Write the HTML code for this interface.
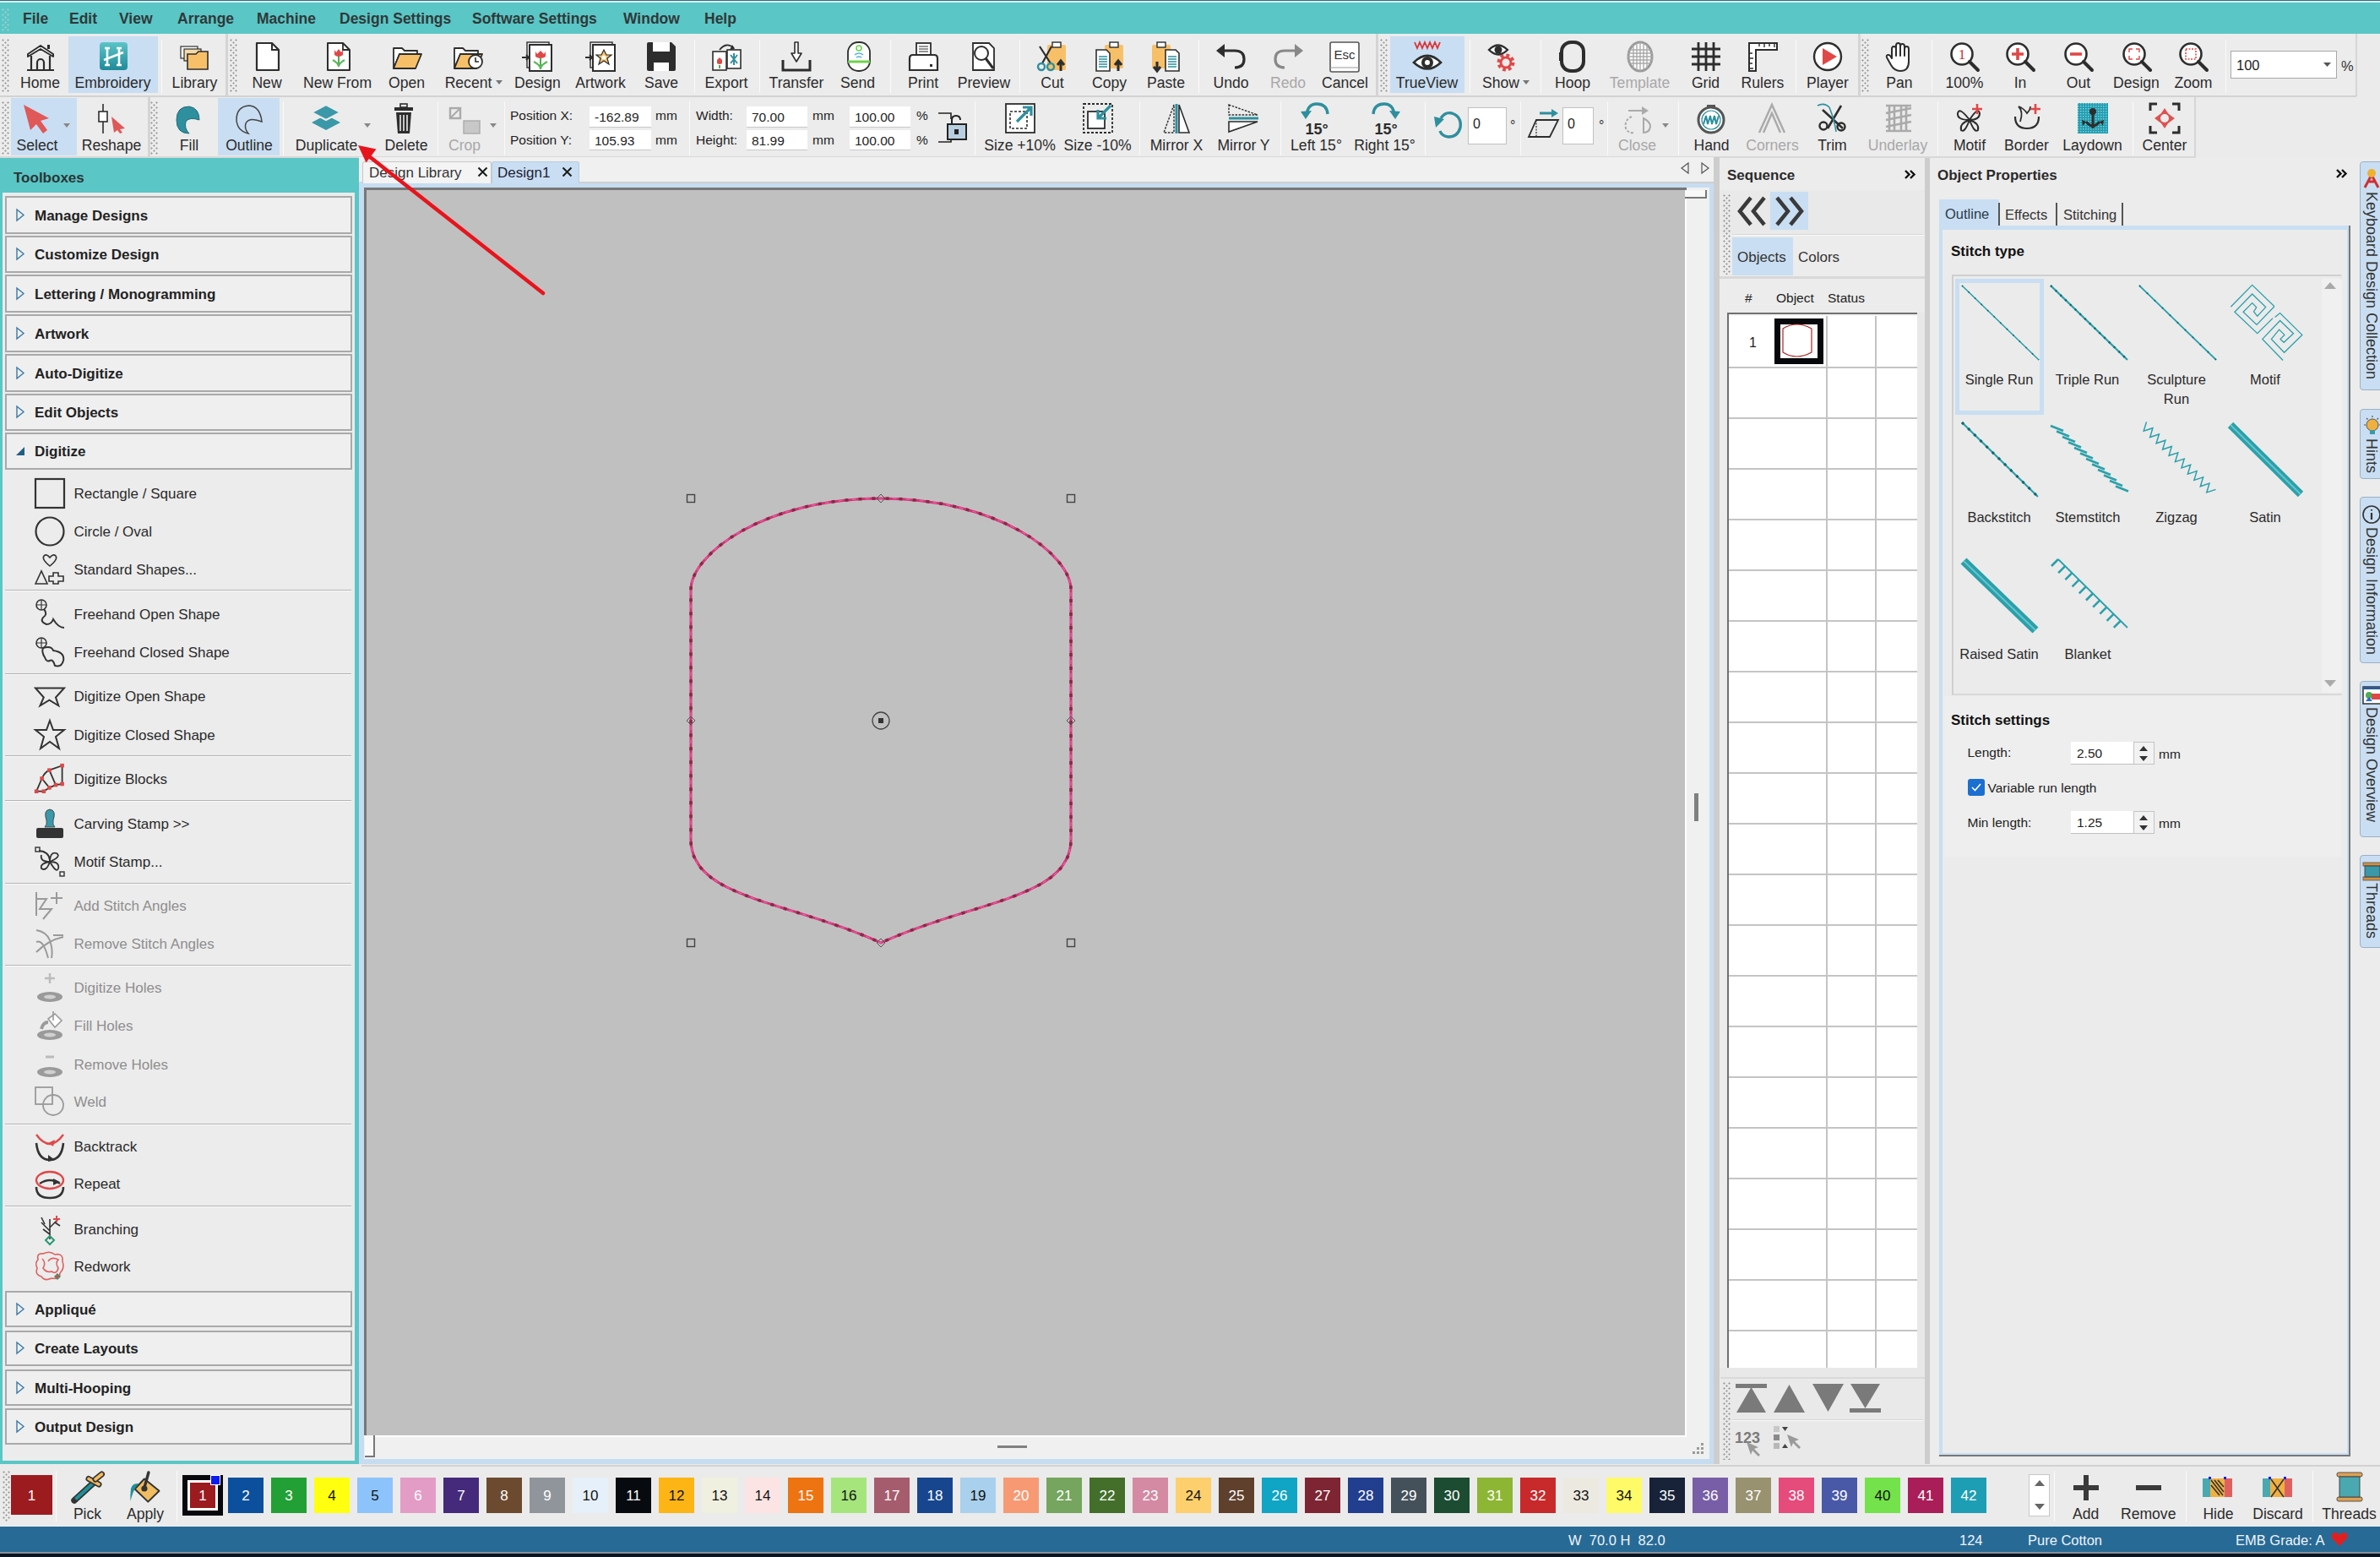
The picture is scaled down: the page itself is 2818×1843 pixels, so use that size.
<!DOCTYPE html><html><head><meta charset="utf-8"><style>
html,body{margin:0;padding:0;}
body{width:2818px;height:1843px;position:relative;overflow:hidden;background:#ebebeb;font-family:"Liberation Sans", sans-serif;}
.t{position:absolute;white-space:nowrap;}
.b{position:absolute;box-sizing:border-box;}
svg.b{overflow:visible;}

</style></head><body>
<div class="b" style="left:0px;top:0px;width:2818px;height:1px;background:#2f6b95"></div>
<div class="b" style="left:0px;top:1px;width:2818px;height:2px;background:#d9f0f0"></div>
<div class="b" style="left:0px;top:3px;width:2818px;height:37px;background:#5ac6c6"></div>
<div class="b" style="left:2px;top:10px;width:9px;height:27px;background-image:radial-gradient(circle at 1.5px 1.5px,#9ccfcf 0.9px,transparent 1.3px),radial-gradient(circle at 1.5px 1.5px,#9ccfcf 0.9px,transparent 1.3px);background-size:6px 6px,6px 6px;background-position:0 0,3px 3px;"></div>
<div class="t" style="left:27.0px;top:14.0px;font-size:17.5px;line-height:17.5px;color:#303838;font-weight:bold;">File</div>
<div class="t" style="left:82.0px;top:14.0px;font-size:17.5px;line-height:17.5px;color:#303838;font-weight:bold;">Edit</div>
<div class="t" style="left:141.0px;top:14.0px;font-size:17.5px;line-height:17.5px;color:#303838;font-weight:bold;">View</div>
<div class="t" style="left:210.0px;top:14.0px;font-size:17.5px;line-height:17.5px;color:#303838;font-weight:bold;">Arrange</div>
<div class="t" style="left:304.0px;top:14.0px;font-size:17.5px;line-height:17.5px;color:#303838;font-weight:bold;">Machine</div>
<div class="t" style="left:402.0px;top:14.0px;font-size:17.5px;line-height:17.5px;color:#303838;font-weight:bold;">Design Settings</div>
<div class="t" style="left:559.0px;top:14.0px;font-size:17.5px;line-height:17.5px;color:#303838;font-weight:bold;">Software Settings</div>
<div class="t" style="left:738.0px;top:14.0px;font-size:17.5px;line-height:17.5px;color:#303838;font-weight:bold;">Window</div>
<div class="t" style="left:834.0px;top:14.0px;font-size:17.5px;line-height:17.5px;color:#303838;font-weight:bold;">Help</div>
<div class="b" style="left:0px;top:40px;width:2818px;height:75px;background:#ebebeb"></div>
<div class="b" style="left:0px;top:40px;width:2790px;height:73px;background:#ececec"></div>
<div class="b" style="left:0px;top:113px;width:2790px;height:2px;background:#d2d2d2"></div>
<div class="b" style="left:2789px;top:40px;width:2px;height:74px;background:#d6d6d6"></div>
<div class="b" style="left:2598px;top:115px;width:2px;height:71px;background:#d6d6d6"></div>
<div class="b" style="left:0px;top:115px;width:2598px;height:70px;background:#ececec"></div>
<div class="b" style="left:0px;top:185px;width:2600px;height:2px;background:#d8d8d8"></div>
<div class="b" style="left:267px;top:40px;width:3px;height:73px;background:#d4d4d4"></div>
<div class="b" style="left:1629px;top:40px;width:3px;height:73px;background:#d4d4d4"></div>
<div class="b" style="left:2200px;top:40px;width:3px;height:73px;background:#d4d4d4"></div>
<div class="b" style="left:175px;top:115px;width:3px;height:70px;background:#d4d4d4"></div>
<div class="b" style="left:2px;top:46px;width:9px;height:63px;background-image:radial-gradient(circle at 1.5px 1.5px,#a0a0a0 0.9px,transparent 1.3px),radial-gradient(circle at 1.5px 1.5px,#a0a0a0 0.9px,transparent 1.3px);background-size:6px 6px,6px 6px;background-position:0 0,3px 3px;"></div>
<div class="b" style="left:272px;top:46px;width:9px;height:63px;background-image:radial-gradient(circle at 1.5px 1.5px,#a0a0a0 0.9px,transparent 1.3px),radial-gradient(circle at 1.5px 1.5px,#a0a0a0 0.9px,transparent 1.3px);background-size:6px 6px,6px 6px;background-position:0 0,3px 3px;"></div>
<div class="b" style="left:1634px;top:46px;width:9px;height:63px;background-image:radial-gradient(circle at 1.5px 1.5px,#a0a0a0 0.9px,transparent 1.3px),radial-gradient(circle at 1.5px 1.5px,#a0a0a0 0.9px,transparent 1.3px);background-size:6px 6px,6px 6px;background-position:0 0,3px 3px;"></div>
<div class="b" style="left:2204px;top:46px;width:9px;height:63px;background-image:radial-gradient(circle at 1.5px 1.5px,#a0a0a0 0.9px,transparent 1.3px),radial-gradient(circle at 1.5px 1.5px,#a0a0a0 0.9px,transparent 1.3px);background-size:6px 6px,6px 6px;background-position:0 0,3px 3px;"></div>
<div class="b" style="left:2px;top:120px;width:9px;height:63px;background-image:radial-gradient(circle at 1.5px 1.5px,#a0a0a0 0.9px,transparent 1.3px),radial-gradient(circle at 1.5px 1.5px,#a0a0a0 0.9px,transparent 1.3px);background-size:6px 6px,6px 6px;background-position:0 0,3px 3px;"></div>
<div class="b" style="left:178px;top:120px;width:9px;height:63px;background-image:radial-gradient(circle at 1.5px 1.5px,#a0a0a0 0.9px,transparent 1.3px),radial-gradient(circle at 1.5px 1.5px,#a0a0a0 0.9px,transparent 1.3px);background-size:6px 6px,6px 6px;background-position:0 0,3px 3px;"></div>
<div class="b" style="left:81px;top:43px;width:106px;height:67px;background:#c9def2"></div>
<div class="b" style="left:1646px;top:43px;width:88px;height:67px;background:#c9def2"></div>
<div class="b" style="left:13px;top:116px;width:78px;height:68px;background:#c9def2"></div>
<div class="b" style="left:258px;top:116px;width:73px;height:68px;background:#c9def2"></div>
<div class="b" style="left:191px;top:47px;width:1px;height:63px;background:#cfcfcf;border-right:1px solid #fafafa"></div>
<div class="b" style="left:822px;top:47px;width:1px;height:63px;background:#cfcfcf;border-right:1px solid #fafafa"></div>
<div class="b" style="left:899px;top:47px;width:1px;height:63px;background:#cfcfcf;border-right:1px solid #fafafa"></div>
<div class="b" style="left:1054px;top:47px;width:1px;height:63px;background:#cfcfcf;border-right:1px solid #fafafa"></div>
<div class="b" style="left:1207px;top:47px;width:1px;height:63px;background:#cfcfcf;border-right:1px solid #fafafa"></div>
<div class="b" style="left:1419px;top:47px;width:1px;height:63px;background:#cfcfcf;border-right:1px solid #fafafa"></div>
<div class="b" style="left:1740px;top:47px;width:1px;height:63px;background:#cfcfcf;border-right:1px solid #fafafa"></div>
<div class="b" style="left:1824px;top:47px;width:1px;height:63px;background:#cfcfcf;border-right:1px solid #fafafa"></div>
<div class="b" style="left:2126px;top:47px;width:1px;height:63px;background:#cfcfcf;border-right:1px solid #fafafa"></div>
<div class="b" style="left:2287px;top:47px;width:1px;height:63px;background:#cfcfcf;border-right:1px solid #fafafa"></div>
<div class="b" style="left:2635px;top:47px;width:1px;height:63px;background:#cfcfcf;border-right:1px solid #fafafa"></div>
<div class="b" style="left:335px;top:120px;width:1px;height:64px;background:#cfcfcf;border-right:1px solid #fafafa"></div>
<div class="b" style="left:518px;top:120px;width:1px;height:64px;background:#cfcfcf;border-right:1px solid #fafafa"></div>
<div class="b" style="left:597px;top:120px;width:1px;height:64px;background:#cfcfcf;border-right:1px solid #fafafa"></div>
<div class="b" style="left:816px;top:120px;width:1px;height:64px;background:#cfcfcf;border-right:1px solid #fafafa"></div>
<div class="b" style="left:1154px;top:120px;width:1px;height:64px;background:#cfcfcf;border-right:1px solid #fafafa"></div>
<div class="b" style="left:1349px;top:120px;width:1px;height:64px;background:#cfcfcf;border-right:1px solid #fafafa"></div>
<div class="b" style="left:1516px;top:120px;width:1px;height:64px;background:#cfcfcf;border-right:1px solid #fafafa"></div>
<div class="b" style="left:1687px;top:120px;width:1px;height:64px;background:#cfcfcf;border-right:1px solid #fafafa"></div>
<div class="b" style="left:1800px;top:120px;width:1px;height:64px;background:#cfcfcf;border-right:1px solid #fafafa"></div>
<div class="b" style="left:1903px;top:120px;width:1px;height:64px;background:#cfcfcf;border-right:1px solid #fafafa"></div>
<div class="b" style="left:1987px;top:120px;width:1px;height:64px;background:#cfcfcf;border-right:1px solid #fafafa"></div>
<div class="b" style="left:2294px;top:120px;width:1px;height:64px;background:#cfcfcf;border-right:1px solid #fafafa"></div>
<div class="b" style="left:2525px;top:120px;width:1px;height:64px;background:#cfcfcf;border-right:1px solid #fafafa"></div>
<svg class="b" style="left:30px;top:49px" width="36" height="36" viewBox="0 0 36 36"><path d="M3 15 L18 5 L33 15 L33 18 L18 9 L3 18 Z" fill="#fff" stroke="#2d2d2d" stroke-width="2" stroke-linejoin="round"/><path d="M7 17 V34 M29 17 V34 M2 34 H34" stroke="#2d2d2d" stroke-width="2.2" fill="none"/><path d="M14 34 V25 A4 4 0 0 1 22 25 V34" stroke="#2d2d2d" stroke-width="2.2" fill="none"/><rect x="26" y="4" width="3" height="5" fill="#2d2d2d"/></svg>
<div class="t" style="left:-102.5px;width:300px;text-align:center;top:90.1px;font-size:17.6px;line-height:17.6px;color:#2b2b2b;font-weight:normal;">Home</div>
<svg class="b" style="left:116px;top:49px" width="36" height="36" viewBox="0 0 36 36"><defs><linearGradient id="gE" x1="0" y1="0" x2="0" y2="1"><stop offset="0" stop-color="#5cc4c8"/><stop offset="1" stop-color="#1f8a98"/></linearGradient></defs><rect x="2" y="1" width="33" height="33" rx="4" fill="url(#gE)"/><path d="M11 8 V28 M25 8 V28 M8 8 H14 M22 8 H28 M8 28 H14 M22 28 H28 M7 22 L30 13" stroke="#fff" stroke-width="2.6" fill="none"/></svg>
<div class="t" style="left:-16.5px;width:300px;text-align:center;top:90.1px;font-size:17.6px;line-height:17.6px;color:#2b2b2b;font-weight:normal;">Embroidery</div>
<svg class="b" style="left:212px;top:49px" width="36" height="36" viewBox="0 0 36 36"><rect x="2" y="6" width="20" height="14" fill="#fff" stroke="#2d2d2d" stroke-width="1.2"/><rect x="6" y="9" width="20" height="14" fill="#f3d9a8" stroke="#2d2d2d" stroke-width="1.2"/><path d="M10 15 H20 L23 12 H34 V33 H10 Z" fill="#f7c068" stroke="#2d2d2d" stroke-width="1.6"/></svg>
<div class="t" style="left:80.5px;width:300px;text-align:center;top:90.1px;font-size:17.6px;line-height:17.6px;color:#2b2b2b;font-weight:normal;">Library</div>
<svg class="b" style="left:298px;top:49px" width="36" height="36" viewBox="0 0 36 36"><path d="M6 2 H24 L32 10 V34 H6 Z" fill="#fff" stroke="#2d2d2d" stroke-width="2.2" stroke-linejoin="round"/><path d="M24 2 V10 H32" fill="none" stroke="#2d2d2d" stroke-width="2"/></svg>
<div class="t" style="left:166.0px;width:300px;text-align:center;top:90.1px;font-size:17.6px;line-height:17.6px;color:#2b2b2b;font-weight:normal;">New</div>
<svg class="b" style="left:382px;top:49px" width="36" height="36" viewBox="0 0 36 36"><path d="M6 2 H24 L32 10 V34 H6 Z" fill="#fff" stroke="#2d2d2d" stroke-width="2" stroke-linejoin="round"/><path d="M24 2 V10 H32" fill="none" stroke="#2d2d2d" stroke-width="1.8"/><path d="M19 28 V17" stroke="#4caf50" stroke-width="2"/><path d="M12 22 Q19 26 19 30 Q19 26 26 22" stroke="#5cb85c" stroke-width="2.2" fill="none"/><path d="M14 10 L16 13 L19 9 L22 13 L24 10 V16 Q19 20 14 16 Z" fill="#e04848"/></svg>
<div class="t" style="left:249.5px;width:300px;text-align:center;top:90.1px;font-size:17.6px;line-height:17.6px;color:#2b2b2b;font-weight:normal;">New From</div>
<svg class="b" style="left:464px;top:49px" width="36" height="36" viewBox="0 0 36 36"><path d="M2 8 H12 L15 11 H30 V15 H9 L2 32 Z" fill="#fff" stroke="#2d2d2d" stroke-width="1.8" stroke-linejoin="round"/><path d="M9 15 H35 L28 32 H2 Z" fill="#f7c068" stroke="#2d2d2d" stroke-width="1.8" stroke-linejoin="round"/></svg>
<div class="t" style="left:331.5px;width:300px;text-align:center;top:90.1px;font-size:17.6px;line-height:17.6px;color:#2b2b2b;font-weight:normal;">Open</div>
<svg class="b" style="left:536px;top:49px" width="36" height="36" viewBox="0 0 36 36"><path d="M2 8 H12 L15 11 H30 V15 H9 L2 32 Z" fill="#fff" stroke="#2d2d2d" stroke-width="1.8" stroke-linejoin="round"/><path d="M9 15 H35 L28 32 H2 Z" fill="#f7c068" stroke="#2d2d2d" stroke-width="1.8" stroke-linejoin="round"/><circle cx="27" cy="24" r="8" fill="#fff" stroke="#2d2d2d" stroke-width="1.8"/><path d="M27 19 V24 H31" stroke="#2d2d2d" stroke-width="1.6" fill="none"/></svg>
<div class="t" style="left:404.5px;width:300px;text-align:center;top:90.1px;font-size:17.6px;line-height:17.6px;color:#2b2b2b;font-weight:normal;">Recent</div>
<svg class="b" style="left:618px;top:49px" width="36" height="36" viewBox="0 0 36 36"><rect x="6" y="1" width="26" height="30" fill="#f4f4f4" stroke="#2d2d2d" stroke-width="1.4"/><rect x="9" y="4" width="26" height="31" fill="#fff" stroke="#2d2d2d" stroke-width="2"/><path d="M22 30 V20" stroke="#4caf50" stroke-width="2"/><path d="M14 24 Q22 28 22 33 Q22 28 30 24" stroke="#5cb85c" stroke-width="2.2" fill="none"/><path d="M16 12 L18 15 L22 11 L26 15 L28 12 V18 Q22 22 16 18 Z" fill="#e04848"/><path d="M0 19 H8 M5 16 L8 19 L5 22" stroke="#2d2d2d" stroke-width="2" fill="none"/></svg>
<div class="t" style="left:486.5px;width:300px;text-align:center;top:90.1px;font-size:17.6px;line-height:17.6px;color:#2b2b2b;font-weight:normal;">Design</div>
<svg class="b" style="left:693px;top:49px" width="36" height="36" viewBox="0 0 36 36"><rect x="6" y="1" width="26" height="30" fill="#f4f4f4" stroke="#2d2d2d" stroke-width="1.4"/><rect x="9" y="4" width="26" height="31" fill="#fff" stroke="#2d2d2d" stroke-width="2"/><path d="M22 10 L25 16 L31 16 L26 20 L28 27 L22 23 L16 27 L18 20 L13 16 L19 16 Z" fill="#f7c068" stroke="#2d2d2d" stroke-width="1.2"/><circle cx="22" cy="19" r="2.5" fill="#fff"/><path d="M0 19 H8 M5 16 L8 19 L5 22" stroke="#2d2d2d" stroke-width="2" fill="none"/></svg>
<div class="t" style="left:561.0px;width:300px;text-align:center;top:90.1px;font-size:17.6px;line-height:17.6px;color:#2b2b2b;font-weight:normal;">Artwork</div>
<svg class="b" style="left:765px;top:49px" width="36" height="36" viewBox="0 0 36 36"><path d="M1 3 Q1 1 3 1 H30 L35 6 V33 Q35 35 33 35 H3 Q1 35 1 33 Z" fill="#2d2d2d"/><rect x="8" y="1" width="20" height="11" fill="#fff"/><rect x="9" y="25" width="18" height="10" fill="#fff"/></svg>
<div class="t" style="left:633.0px;width:300px;text-align:center;top:90.1px;font-size:17.6px;line-height:17.6px;color:#2b2b2b;font-weight:normal;">Save</div>
<svg class="b" style="left:842px;top:49px" width="36" height="36" viewBox="0 0 36 36"><rect x="2" y="12" width="16" height="22" fill="#fff" stroke="#2d2d2d" stroke-width="1.6"/><rect x="19" y="10" width="16" height="22" fill="#fff" stroke="#2d2d2d" stroke-width="1.6"/><path d="M7 22 L10 19 L13 22 V26 Q10 28 7 26 Z" fill="#e04848"/><path d="M10 28 V32" stroke="#4caf50" stroke-width="2"/><path d="M23 16 L31 26 M31 16 L23 26 M27 14 V28" stroke="#2e8f9e" stroke-width="2"/><path d="M10 10 Q18 0 27 8" stroke="#2d2d2d" stroke-width="1.8" fill="none"/><path d="M25 4 L28 9 L22 10" fill="#2d2d2d"/></svg>
<div class="t" style="left:710.0px;width:300px;text-align:center;top:90.1px;font-size:17.6px;line-height:17.6px;color:#2b2b2b;font-weight:normal;">Export</div>
<svg class="b" style="left:925px;top:49px" width="36" height="36" viewBox="0 0 36 36"><path d="M16 1 H20 V14 H24 L18 24 L12 14 H16 Z" fill="#fff" stroke="#2d2d2d" stroke-width="1.6" stroke-linejoin="round"/><path d="M2 22 V34 H34 V22" stroke="#2d2d2d" stroke-width="3" fill="none"/></svg>
<div class="t" style="left:793.0px;width:300px;text-align:center;top:90.1px;font-size:17.6px;line-height:17.6px;color:#2b2b2b;font-weight:normal;">Transfer</div>
<svg class="b" style="left:998px;top:49px" width="36" height="36" viewBox="0 0 36 36"><rect x="6" y="1" width="26" height="34" rx="12" fill="#fff" stroke="#2d2d2d" stroke-width="1.8"/><path d="M6 24 H32" stroke="#6cd24c" stroke-width="3"/><circle cx="19" cy="8" r="3" fill="none" stroke="#6cd24c" stroke-width="1.6"/><path d="M14 16 Q19 12 24 16 M16 19 Q19 17 22 19" stroke="#55b4e0" stroke-width="1.6" fill="none"/></svg>
<div class="t" style="left:865.5px;width:300px;text-align:center;top:90.1px;font-size:17.6px;line-height:17.6px;color:#2b2b2b;font-weight:normal;">Send</div>
<svg class="b" style="left:1075px;top:49px" width="36" height="36" viewBox="0 0 36 36"><rect x="10" y="2" width="17" height="14" fill="#fff" stroke="#2d2d2d" stroke-width="1.8"/><path d="M13 6 H24 M13 9 H24 M13 12 H24" stroke="#2d2d2d" stroke-width="1.2"/><path d="M2 20 Q2 16 6 16 H31 Q35 16 35 20 V34 H2 Z" fill="#fff" stroke="#2d2d2d" stroke-width="2.2"/><rect x="26" y="27" width="3" height="3" fill="#2d2d2d"/></svg>
<div class="t" style="left:943.0px;width:300px;text-align:center;top:90.1px;font-size:17.6px;line-height:17.6px;color:#2b2b2b;font-weight:normal;">Print</div>
<svg class="b" style="left:1147px;top:49px" width="36" height="36" viewBox="0 0 36 36"><path d="M5 2 H24 L30 8 V34 H5 Z" fill="#fff" stroke="#2d2d2d" stroke-width="1.8"/><circle cx="15" cy="14" r="8" fill="#fff" stroke="#2d2d2d" stroke-width="2"/><path d="M20 20 L29 32" stroke="#2d2d2d" stroke-width="3"/></svg>
<div class="t" style="left:1015.0px;width:300px;text-align:center;top:90.1px;font-size:17.6px;line-height:17.6px;color:#2b2b2b;font-weight:normal;">Preview</div>
<svg class="b" style="left:1228px;top:49px" width="36" height="36" viewBox="0 0 36 36"><rect x="12" y="4" width="22" height="30" rx="2" fill="#f7c068"/><rect x="18" y="1" width="10" height="6" fill="#fff" stroke="#2d2d2d" stroke-width="1.4"/><path d="M3 6 L16 26 M17 6 L6 26" stroke="#2d2d2d" stroke-width="2.2"/><circle cx="5" cy="30" r="4" fill="none" stroke="#2e8f9e" stroke-width="2.4"/><circle cx="16" cy="30" r="4" fill="none" stroke="#2e8f9e" stroke-width="2.4"/><path d="M28 35 V25 M24 28 L28 23 L32 28" stroke="#2d2d2d" stroke-width="3" fill="none"/></svg>
<div class="t" style="left:1096.0px;width:300px;text-align:center;top:90.1px;font-size:17.6px;line-height:17.6px;color:#2b2b2b;font-weight:normal;">Cut</div>
<svg class="b" style="left:1296px;top:49px" width="36" height="36" viewBox="0 0 36 36"><rect x="12" y="4" width="22" height="28" rx="2" fill="#f7c068"/><rect x="18" y="1" width="10" height="6" fill="#fff" stroke="#2d2d2d" stroke-width="1.4"/><path d="M2 10 H14 L18 14 V35 H2 Z" fill="#fff" stroke="#2d2d2d" stroke-width="1.6"/><path d="M5 18 H15 M5 21 H15 M5 24 H15 M5 27 H15 M5 30 H15" stroke="#2e8f9e" stroke-width="1.6"/><path d="M28 35 V25 M24 28 L28 23 L32 28" stroke="#2d2d2d" stroke-width="3" fill="none"/></svg>
<div class="t" style="left:1163.5px;width:300px;text-align:center;top:90.1px;font-size:17.6px;line-height:17.6px;color:#2b2b2b;font-weight:normal;">Copy</div>
<svg class="b" style="left:1362px;top:49px" width="36" height="36" viewBox="0 0 36 36"><rect x="2" y="4" width="22" height="28" rx="2" fill="#f7c068"/><rect x="8" y="1" width="10" height="6" fill="#fff" stroke="#2d2d2d" stroke-width="1.4"/><path d="M18 10 H30 L34 14 V35 H18 Z" fill="#fff" stroke="#2d2d2d" stroke-width="1.6"/><path d="M21 18 H31 M21 21 H31 M21 24 H31 M21 27 H31 M21 30 H31" stroke="#2e8f9e" stroke-width="1.6"/><path d="M8 24 V34 M4 30 L8 35 L12 30" stroke="#2d2d2d" stroke-width="3" fill="none"/></svg>
<div class="t" style="left:1230.5px;width:300px;text-align:center;top:90.1px;font-size:17.6px;line-height:17.6px;color:#2b2b2b;font-weight:normal;">Paste</div>
<svg class="b" style="left:1440px;top:49px" width="36" height="36" viewBox="0 0 36 36"><path d="M8 11 H22 Q33 11 33 21 Q33 31 22 31" stroke="#2d2d2d" stroke-width="3.2" fill="none"/><path d="M0 11 L10 3 V19 Z" fill="#2d2d2d"/></svg>
<div class="t" style="left:1307.5px;width:300px;text-align:center;top:90.1px;font-size:17.6px;line-height:17.6px;color:#2b2b2b;font-weight:normal;">Undo</div>
<svg class="b" style="left:1507px;top:49px" width="36" height="36" viewBox="0 0 36 36"><path d="M28 11 H14 Q3 11 3 21 Q3 31 14 31" stroke="#888" stroke-width="3.2" fill="none"/><path d="M36 11 L26 3 V19 Z" fill="#888"/></svg>
<div class="t" style="left:1375.0px;width:300px;text-align:center;top:90.1px;font-size:17.6px;line-height:17.6px;color:#a8a8a8;font-weight:normal;">Redo</div>
<svg class="b" style="left:1574px;top:49px" width="36" height="36" viewBox="0 0 36 36"><rect x="1" y="1" width="34" height="35" rx="2" fill="#fff" stroke="#555" stroke-width="1.6"/><path d="M1 31 H35" stroke="#999" stroke-width="1"/><text x="18" y="21" font-family="Liberation Sans" font-size="15" text-anchor="middle" fill="#333">Esc</text></svg>
<div class="t" style="left:1442.5px;width:300px;text-align:center;top:90.1px;font-size:17.6px;line-height:17.6px;color:#2b2b2b;font-weight:normal;">Cancel</div>
<svg class="b" style="left:1672px;top:49px" width="36" height="36" viewBox="0 0 36 36"><path d="M3 1 L6 8 L9 1 L12 8 L15 1 L18 8 L21 1 L24 8 L27 1 L30 8 L33 1" stroke="#e03030" stroke-width="1.8" fill="none"/><path d="M2 25 Q18 9 34 25 Q18 40 2 25 Z" fill="#fff" stroke="#2d2d2d" stroke-width="2.6"/><circle cx="18" cy="25" r="7" fill="#2d2d2d"/><circle cx="18" cy="25" r="3" fill="#fff"/></svg>
<div class="t" style="left:1539.5px;width:300px;text-align:center;top:90.1px;font-size:17.6px;line-height:17.6px;color:#2b2b2b;font-weight:normal;">TrueView</div>
<svg class="b" style="left:1759px;top:49px" width="36" height="36" viewBox="0 0 36 36"><path d="M4 10 Q15 -1 26 10 Q15 21 4 10 Z" fill="#fff" stroke="#2d2d2d" stroke-width="2.4"/><circle cx="15" cy="10" r="4.5" fill="#2d2d2d"/><circle cx="24" cy="25" r="8" fill="none" stroke="#e04848" stroke-width="5" stroke-dasharray="3.5 2.8"/><circle cx="24" cy="25" r="6" fill="none" stroke="#e04848" stroke-width="3"/></svg>
<div class="t" style="left:1627.0px;width:300px;text-align:center;top:90.1px;font-size:17.6px;line-height:17.6px;color:#2b2b2b;font-weight:normal;">Show</div>
<svg class="b" style="left:1844px;top:49px" width="36" height="36" viewBox="0 0 36 36"><rect x="5" y="1" width="26" height="34" rx="11" fill="none" stroke="#2d2d2d" stroke-width="4"/><rect x="2" y="13" width="4" height="10" fill="#2d2d2d"/></svg>
<div class="t" style="left:1712.0px;width:300px;text-align:center;top:90.1px;font-size:17.6px;line-height:17.6px;color:#2b2b2b;font-weight:normal;">Hoop</div>
<svg class="b" style="left:1924px;top:49px" width="36" height="36" viewBox="0 0 36 36"><ellipse cx="18" cy="18" rx="14" ry="17" fill="#fff" stroke="#999" stroke-width="3"/><path d="M10 4 V32 M14 2 V34 M18 1 V35 M22 2 V34 M26 4 V32 M4 10 H32 M3 14 H33 M3 18 H33 M3 22 H33 M4 26 H32" stroke="#aaa" stroke-width="1.4"/></svg>
<div class="t" style="left:1791.5px;width:300px;text-align:center;top:90.1px;font-size:17.6px;line-height:17.6px;color:#a8a8a8;font-weight:normal;">Template</div>
<svg class="b" style="left:2002px;top:49px" width="36" height="36" viewBox="0 0 36 36"><path d="M9 1 V35 M18 1 V35 M27 1 V35 M1 9 H35 M1 18 H35 M1 27 H35" stroke="#2d2d2d" stroke-width="2.8"/></svg>
<div class="t" style="left:1869.5px;width:300px;text-align:center;top:90.1px;font-size:17.6px;line-height:17.6px;color:#2b2b2b;font-weight:normal;">Grid</div>
<svg class="b" style="left:2069px;top:49px" width="36" height="36" viewBox="0 0 36 36"><path d="M2 2 H35 V10 H10 V35 H2 Z" fill="#fff" stroke="#2d2d2d" stroke-width="2"/><path d="M14 2 V6 M20 2 V7 M26 2 V6 M32 2 V7 M2 14 H6 M2 20 H7 M2 26 H6 M2 32 H7" stroke="#2d2d2d" stroke-width="1.4"/></svg>
<div class="t" style="left:1937.0px;width:300px;text-align:center;top:90.1px;font-size:17.6px;line-height:17.6px;color:#2b2b2b;font-weight:normal;">Rulers</div>
<svg class="b" style="left:2146px;top:49px" width="36" height="36" viewBox="0 0 36 36"><circle cx="18" cy="18" r="16" fill="#fff" stroke="#2d2d2d" stroke-width="2.4"/><path d="M12 8 L29 18 L12 28 Z" fill="#e04848"/></svg>
<div class="t" style="left:2014.0px;width:300px;text-align:center;top:90.1px;font-size:17.6px;line-height:17.6px;color:#2b2b2b;font-weight:normal;">Player</div>
<svg class="b" style="left:2231px;top:49px" width="36" height="36" viewBox="0 0 36 36"><path d="M9 20 V9 Q9 6 11.5 6 Q14 6 14 9 V17 V5 Q14 2 16.5 2 Q19 2 19 5 V17 V6 Q19 3 21.5 3 Q24 3 24 6 V17 V9 Q24 6 26.5 6 Q29 6 29 9 V24 Q29 35 19 35 Q12 35 8 28 L3 19 Q2 16 5 16 Q7 16 9 20 Z" fill="#fff" stroke="#2d2d2d" stroke-width="2" stroke-linejoin="round"/></svg>
<div class="t" style="left:2099.0px;width:300px;text-align:center;top:90.1px;font-size:17.6px;line-height:17.6px;color:#2b2b2b;font-weight:normal;">Pan</div>
<svg class="b" style="left:2308px;top:49px" width="36" height="36" viewBox="0 0 36 36"><circle cx="15" cy="15" r="12.5" fill="#fff" stroke="#2d2d2d" stroke-width="2.6"/><path d="M24 24 L34 34" stroke="#2d2d2d" stroke-width="4" stroke-linecap="round"/><text x="15" y="21" font-family="Liberation Serif" font-size="17" text-anchor="middle" fill="#d03030">1</text></svg>
<div class="t" style="left:2176.0px;width:300px;text-align:center;top:90.1px;font-size:17.6px;line-height:17.6px;color:#2b2b2b;font-weight:normal;">100%</div>
<svg class="b" style="left:2374px;top:49px" width="36" height="36" viewBox="0 0 36 36"><circle cx="15" cy="15" r="12.5" fill="#fff" stroke="#2d2d2d" stroke-width="2.6"/><path d="M24 24 L34 34" stroke="#2d2d2d" stroke-width="4" stroke-linecap="round"/><path d="M15 8 V22 M8 15 H22" stroke="#e04848" stroke-width="3.6"/></svg>
<div class="t" style="left:2242.0px;width:300px;text-align:center;top:90.1px;font-size:17.6px;line-height:17.6px;color:#2b2b2b;font-weight:normal;">In</div>
<svg class="b" style="left:2443px;top:49px" width="36" height="36" viewBox="0 0 36 36"><circle cx="15" cy="15" r="12.5" fill="#fff" stroke="#2d2d2d" stroke-width="2.6"/><path d="M24 24 L34 34" stroke="#2d2d2d" stroke-width="4" stroke-linecap="round"/><path d="M8 15 H22" stroke="#e04848" stroke-width="3.6"/></svg>
<div class="t" style="left:2311.0px;width:300px;text-align:center;top:90.1px;font-size:17.6px;line-height:17.6px;color:#2b2b2b;font-weight:normal;">Out</div>
<svg class="b" style="left:2512px;top:49px" width="36" height="36" viewBox="0 0 36 36"><circle cx="15" cy="15" r="12.5" fill="#fff" stroke="#2d2d2d" stroke-width="2.6"/><path d="M24 24 L34 34" stroke="#2d2d2d" stroke-width="4" stroke-linecap="round"/><path d="M9 13 V9 H13 M17 9 H21 V13 M21 17 V21 H17 M13 21 H9 V17" stroke="#e04848" stroke-width="1.4" fill="none"/></svg>
<div class="t" style="left:2379.5px;width:300px;text-align:center;top:90.1px;font-size:17.6px;line-height:17.6px;color:#2b2b2b;font-weight:normal;">Design</div>
<svg class="b" style="left:2579px;top:49px" width="36" height="36" viewBox="0 0 36 36"><circle cx="15" cy="15" r="12.5" fill="#fff" stroke="#2d2d2d" stroke-width="2.6"/><path d="M24 24 L34 34" stroke="#2d2d2d" stroke-width="4" stroke-linecap="round"/><rect x="9" y="9" width="12" height="12" fill="none" stroke="#e04848" stroke-width="1.6" stroke-dasharray="2 1.5"/></svg>
<div class="t" style="left:2447.0px;width:300px;text-align:center;top:90.1px;font-size:17.6px;line-height:17.6px;color:#2b2b2b;font-weight:normal;">Zoom</div>
<svg class="b" style="left:587px;top:95px" width="8" height="5" viewBox="0 0 8 5"><path d="M0 0 H8 L4 5 Z" fill="#777"/></svg>
<svg class="b" style="left:1803px;top:95px" width="8" height="5" viewBox="0 0 8 5"><path d="M0 0 H8 L4 5 Z" fill="#777"/></svg>
<svg class="b" style="left:26px;top:122px" width="36" height="36" viewBox="0 0 36 36"><path d="M2 2 L32 18 L22 21 L30 32 L25 36 L17 25 L10 32 Z" fill="#e05858" /></svg>
<div class="t" style="left:-106.0px;width:300px;text-align:center;top:163.6px;font-size:17.6px;line-height:17.6px;color:#2b2b2b;font-weight:normal;">Select</div>
<svg class="b" style="left:114px;top:122px" width="36" height="36" viewBox="0 0 36 36"><path d="M8 1 V10 M8 22 V36" stroke="#2d2d2d" stroke-width="1.6"/><rect x="3" y="10" width="10" height="12" fill="#fff" stroke="#2d2d2d" stroke-width="1.6"/><path d="M18 16 L34 30 L28 31 L31 35 L28 36 L25 32 L21 35 Z" fill="#e05858"/></svg>
<div class="t" style="left:-18.0px;width:300px;text-align:center;top:163.6px;font-size:17.6px;line-height:17.6px;color:#2b2b2b;font-weight:normal;">Reshape</div>
<svg class="b" style="left:206px;top:122px" width="36" height="36" viewBox="0 0 36 36"><path d="M30 20 Q30 6 18 4 Q3 4 3 20 Q3 36 18 36 Q12 30 14 22 Q18 16 30 20 Z" fill="#2e8f9e" stroke="#256d78" stroke-width="1"/></svg>
<div class="t" style="left:74.0px;width:300px;text-align:center;top:163.6px;font-size:17.6px;line-height:17.6px;color:#2b2b2b;font-weight:normal;">Fill</div>
<svg class="b" style="left:277px;top:122px" width="36" height="36" viewBox="0 0 36 36"><path d="M33 22 Q31 4 18 3 Q3 4 3 20 Q4 33 17 36 Q12 30 14 24 Q18 16 33 22 Z" fill="none" stroke="#444" stroke-width="1.5"/></svg>
<div class="t" style="left:145.0px;width:300px;text-align:center;top:163.6px;font-size:17.6px;line-height:17.6px;color:#2b2b2b;font-weight:normal;">Outline</div>
<svg class="b" style="left:368px;top:122px" width="36" height="36" viewBox="0 0 36 36"><path d="M18 14 L35 23 L18 32 L1 23 Z" fill="#3a98a8"/><path d="M18 2 L35 11 L18 20 L1 11 Z" fill="#3a98a8" stroke="#ececec" stroke-width="2"/></svg>
<div class="t" style="left:236.5px;width:300px;text-align:center;top:163.6px;font-size:17.6px;line-height:17.6px;color:#2b2b2b;font-weight:normal;">Duplicate</div>
<svg class="b" style="left:463px;top:122px" width="36" height="36" viewBox="0 0 36 36"><rect x="4" y="5" width="22" height="4" fill="#2d2d2d"/><rect x="11" y="1" width="8" height="4" fill="none" stroke="#2d2d2d" stroke-width="1.6"/><path d="M6 11 H24 L22 36 H8 Z" fill="#2d2d2d"/><path d="M11 14 V33 M15 14 V33 M19 14 V33" stroke="#ececec" stroke-width="1.6"/></svg>
<div class="t" style="left:331.0px;width:300px;text-align:center;top:163.6px;font-size:17.6px;line-height:17.6px;color:#2b2b2b;font-weight:normal;">Delete</div>
<svg class="b" style="left:532px;top:122px" width="36" height="36" viewBox="0 0 36 36"><rect x="1" y="6" width="12" height="12" fill="none" stroke="#aaa" stroke-width="2.4"/><path d="M1 18 L13 6" stroke="#aaa" stroke-width="2"/><rect x="17" y="21" width="19" height="15" fill="#c8c8c8" stroke="#aaa" stroke-width="1.4"/></svg>
<div class="t" style="left:400.0px;width:300px;text-align:center;top:163.6px;font-size:17.6px;line-height:17.6px;color:#a8a8a8;font-weight:normal;">Crop</div>
<svg class="b" style="left:1190px;top:122px" width="36" height="36" viewBox="0 0 36 36"><rect x="1" y="1" width="34" height="34" fill="#fff" stroke="#2d2d2d" stroke-width="1.8"/><rect x="6" y="10" width="20" height="20" fill="none" stroke="#2d2d2d" stroke-width="1.6" stroke-dasharray="3 2"/><path d="M14 22 L30 6 M21 5 H31 V15" stroke="#2e8f9e" stroke-width="3.2" fill="none"/></svg>
<div class="t" style="left:1057.5px;width:300px;text-align:center;top:163.6px;font-size:17.6px;line-height:17.6px;color:#2b2b2b;font-weight:normal;">Size +10%</div>
<svg class="b" style="left:1282px;top:122px" width="36" height="36" viewBox="0 0 36 36"><rect x="1" y="1" width="34" height="34" fill="none" stroke="#2d2d2d" stroke-width="1.8" stroke-dasharray="3 2"/><rect x="6" y="10" width="20" height="20" fill="#fff" stroke="#2d2d2d" stroke-width="1.8"/><path d="M33 3 L19 17 M18 8 V18 H28" stroke="#2e8f9e" stroke-width="3.2" fill="none"/></svg>
<div class="t" style="left:1149.5px;width:300px;text-align:center;top:163.6px;font-size:17.6px;line-height:17.6px;color:#2b2b2b;font-weight:normal;">Size -10%</div>
<svg class="b" style="left:1375px;top:122px" width="36" height="36" viewBox="0 0 36 36"><path d="M15 2 L3 35 H15 Z" fill="none" stroke="#2d2d2d" stroke-width="1.4" stroke-dasharray="2.5 1.5"/><path d="M21 2 L33 35 H21 Z" fill="#fff" stroke="#2d2d2d" stroke-width="1.6"/><path d="M18 1 V36" stroke="#2e8f9e" stroke-width="3"/></svg>
<div class="t" style="left:1243.0px;width:300px;text-align:center;top:163.6px;font-size:17.6px;line-height:17.6px;color:#2b2b2b;font-weight:normal;">Mirror X</div>
<svg class="b" style="left:1454px;top:122px" width="36" height="36" viewBox="0 0 36 36"><path d="M1 2 L35 14 H1 Z" fill="none" stroke="#2d2d2d" stroke-width="1.4" stroke-dasharray="2.5 1.5"/><path d="M1 22 L35 22 L1 34 Z" fill="#fff" stroke="#2d2d2d" stroke-width="1.6"/><path d="M1 18 H36" stroke="#2e8f9e" stroke-width="3"/></svg>
<div class="t" style="left:1322.5px;width:300px;text-align:center;top:163.6px;font-size:17.6px;line-height:17.6px;color:#2b2b2b;font-weight:normal;">Mirror Y</div>
<svg class="b" style="left:1540px;top:122px" width="36" height="36" viewBox="0 0 36 36"><path d="M7 15 Q8 1 19 1 Q31 1 32 13" stroke="#2e8f9e" stroke-width="3.4" fill="none"/><path d="M0 10 L13 9 L6 19 Z" fill="#2e8f9e"/><text x="19" y="37" font-family="Liberation Sans" font-weight="bold" font-size="18" text-anchor="middle" fill="#2d2d2d">15°</text></svg>
<div class="t" style="left:1408.5px;width:300px;text-align:center;top:163.6px;font-size:17.6px;line-height:17.6px;color:#2b2b2b;font-weight:normal;">Left 15°</div>
<svg class="b" style="left:1622px;top:122px" width="36" height="36" viewBox="0 0 36 36"><path d="M29 15 Q28 1 17 1 Q5 1 4 13" stroke="#2e8f9e" stroke-width="3.4" fill="none"/><path d="M36 10 L23 9 L30 19 Z" fill="#2e8f9e"/><text x="19" y="37" font-family="Liberation Sans" font-weight="bold" font-size="18" text-anchor="middle" fill="#2d2d2d">15°</text></svg>
<div class="t" style="left:1489.5px;width:300px;text-align:center;top:163.6px;font-size:17.6px;line-height:17.6px;color:#2b2b2b;font-weight:normal;">Right 15°</div>
<svg class="b" style="left:1920px;top:122px" width="36" height="36" viewBox="0 0 36 36"><path d="M12 16 Q3 20 5 30 Q8 36 14 35" stroke="#aaa" stroke-width="2" fill="none" stroke-dasharray="3 2"/><path d="M26 18 Q34 22 34 28 Q33 35 26 35 Z" fill="none" stroke="#aaa" stroke-width="2"/><path d="M8 9 H26" stroke="#aaa" stroke-width="2"/><path d="M32 9 L24 4 V14 Z" fill="#aaa"/></svg>
<div class="t" style="left:1788.5px;width:300px;text-align:center;top:163.6px;font-size:17.6px;line-height:17.6px;color:#a8a8a8;font-weight:normal;">Close</div>
<svg class="b" style="left:2008px;top:122px" width="36" height="36" viewBox="0 0 36 36"><circle cx="18" cy="20" r="15" fill="#fff" stroke="#555" stroke-width="3"/><circle cx="18" cy="20" r="11" fill="none" stroke="#2e8f9e" stroke-width="1.2"/><path d="M9 25 L12 15 L14 25 L17 15 L19 25 L22 15 L24 25 L27 15" stroke="#2e8f9e" stroke-width="2" fill="none"/><rect x="13" y="2" width="10" height="4" fill="#555"/></svg>
<div class="t" style="left:1876.5px;width:300px;text-align:center;top:163.6px;font-size:17.6px;line-height:17.6px;color:#2b2b2b;font-weight:normal;">Hand</div>
<svg class="b" style="left:2080px;top:122px" width="36" height="36" viewBox="0 0 36 36"><path d="M3 35 L18 2 L33 35 M8 35 L18 12 L28 35" stroke="#aaa" stroke-width="2.4" fill="none"/></svg>
<div class="t" style="left:1948.5px;width:300px;text-align:center;top:163.6px;font-size:17.6px;line-height:17.6px;color:#a8a8a8;font-weight:normal;">Corners</div>
<svg class="b" style="left:2152px;top:122px" width="36" height="36" viewBox="0 0 36 36"><path d="M6 8 L30 30 M28 3 L12 30" stroke="#2d2d2d" stroke-width="2.6"/><circle cx="7" cy="27" r="4.5" fill="none" stroke="#2d2d2d" stroke-width="2.4"/><circle cx="28" cy="28" r="4.5" fill="none" stroke="#2d2d2d" stroke-width="2.4"/><path d="M0 3 Q8 -1 14 5 Q20 20 22 34" stroke="#2e8f9e" stroke-width="1.6" fill="none"/></svg>
<div class="t" style="left:2019.5px;width:300px;text-align:center;top:163.6px;font-size:17.6px;line-height:17.6px;color:#2b2b2b;font-weight:normal;">Trim</div>
<svg class="b" style="left:2229px;top:122px" width="36" height="36" viewBox="0 0 36 36"><path d="M4 3 H34 M4 33 H34 M8 3 V33 M14 3 V33 M22 3 V33 M28 3 V33 M4 12 L34 6 M4 20 L34 14 M4 28 L34 22" stroke="#aaa" stroke-width="2.6"/></svg>
<div class="t" style="left:2097.0px;width:300px;text-align:center;top:163.6px;font-size:17.6px;line-height:17.6px;color:#a8a8a8;font-weight:normal;">Underlay</div>
<svg class="b" style="left:2314px;top:122px" width="36" height="36" viewBox="0 0 36 36"><path d="M18 20 Q6 4 4 12 Q3 20 18 20 Q6 24 8 32 Q12 36 18 20 Q24 36 28 32 Q30 24 18 20 Q30 20 30 12 Q28 4 18 20" fill="none" stroke="#2d2d2d" stroke-width="2"/><path d="M27 1 V13 M21 7 H33" stroke="#e04848" stroke-width="2.6"/></svg>
<div class="t" style="left:2182.0px;width:300px;text-align:center;top:163.6px;font-size:17.6px;line-height:17.6px;color:#2b2b2b;font-weight:normal;">Motif</div>
<svg class="b" style="left:2382px;top:122px" width="36" height="36" viewBox="0 0 36 36"><path d="M4 16 Q4 30 18 30 Q32 30 32 16" stroke="#2d2d2d" stroke-width="2.2" fill="none"/><path d="M10 22 Q14 10 8 4 Q14 6 18 12 Q22 8 22 4" stroke="#2d2d2d" stroke-width="1.8" fill="none"/><path d="M28 1 V13 M22 7 H34" stroke="#e04848" stroke-width="2.6"/></svg>
<div class="t" style="left:2249.5px;width:300px;text-align:center;top:163.6px;font-size:17.6px;line-height:17.6px;color:#2b2b2b;font-weight:normal;">Border</div>
<svg class="b" style="left:2460px;top:122px" width="36" height="36" viewBox="0 0 36 36"><defs><pattern id="pL" width="3" height="3" patternUnits="userSpaceOnUse"><rect width="3" height="3" fill="#1e9bb0"/><rect width="1.5" height="1.5" fill="#7fd0da"/></pattern></defs><rect x="0" y="0" width="36" height="36" fill="url(#pL)"/><path d="M18 8 V30 M10 22 Q18 32 26 22" stroke="#2d2d2d" stroke-width="3" fill="none"/><circle cx="18" cy="10" r="4" fill="#2d2d2d"/><path d="M5 20 L10 22 L6 27 Z M31 20 L26 22 L30 27 Z" fill="#2d2d2d"/></svg>
<div class="t" style="left:2327.5px;width:300px;text-align:center;top:163.6px;font-size:17.6px;line-height:17.6px;color:#2b2b2b;font-weight:normal;">Laydown</div>
<svg class="b" style="left:2545px;top:122px" width="36" height="36" viewBox="0 0 36 36"><path d="M1 9 V1 H9 M27 1 H35 V9 M35 27 V35 H27 M9 35 H1 V27" stroke="#2d2d2d" stroke-width="3" fill="none"/><path d="M18 6 L22 12 Q24 14 30 18 L22 24 L18 30 L14 24 L6 18 L14 12 Z" fill="#e05050"/><circle cx="18" cy="18" r="5" fill="#ececec"/></svg>
<div class="t" style="left:2413.0px;width:300px;text-align:center;top:163.6px;font-size:17.6px;line-height:17.6px;color:#2b2b2b;font-weight:normal;">Center</div>
<svg class="b" style="left:75px;top:146px" width="8" height="5" viewBox="0 0 8 5"><path d="M0 0 H8 L4 5 Z" fill="#888"/></svg>
<svg class="b" style="left:431px;top:146px" width="8" height="5" viewBox="0 0 8 5"><path d="M0 0 H8 L4 5 Z" fill="#888"/></svg>
<svg class="b" style="left:580px;top:146px" width="8" height="5" viewBox="0 0 8 5"><path d="M0 0 H8 L4 5 Z" fill="#888"/></svg>
<svg class="b" style="left:1968px;top:146px" width="8" height="5" viewBox="0 0 8 5"><path d="M0 0 H8 L4 5 Z" fill="#888"/></svg>
<svg class="b" style="left:1697px;top:128px" width="36" height="36" viewBox="0 0 36 36"><path d="M9 12 Q14 4 22 6 Q34 10 32 23 Q29 34 18 34 Q10 33 8 27" stroke="#2e8f9e" stroke-width="3.4" fill="none"/><path d="M1 10 L13 13 L3 23 Z" fill="#2e8f9e"/></svg>
<svg class="b" style="left:1809px;top:128px" width="36" height="36" viewBox="0 0 36 36"><path d="M10 14 H36 L26 34 H1 Z" fill="none" stroke="#2d2d2d" stroke-width="1.8"/><path d="M10 14 V34" stroke="#2d2d2d" stroke-width="1.2" stroke-dasharray="2 1.5"/><path d="M14 6 H30" stroke="#2e8f9e" stroke-width="3"/><path d="M36 6 L28 1 V11 Z" fill="#2e8f9e"/></svg>
<div class="t" style="left:604.0px;top:128.9px;font-size:15.5px;line-height:15.5px;color:#1e1e1e;font-weight:normal;">Position X:</div>
<div class="t" style="left:604.0px;top:157.9px;font-size:15.5px;line-height:15.5px;color:#1e1e1e;font-weight:normal;">Position Y:</div>
<div class="b" style="left:698px;top:126px;width:73px;height:25px;background:#fff;border-bottom:1px solid #c8c8c8"></div>
<div class="t" style="left:704.0px;top:131.0px;font-size:15.5px;line-height:15.5px;color:#1e1e1e;font-weight:normal;">-162.89</div>
<div class="b" style="left:698px;top:154px;width:73px;height:24px;background:#fff;border-bottom:1px solid #c8c8c8"></div>
<div class="t" style="left:704.0px;top:158.5px;font-size:15.5px;line-height:15.5px;color:#1e1e1e;font-weight:normal;">105.93</div>
<div class="t" style="left:776.0px;top:128.9px;font-size:15.5px;line-height:15.5px;color:#1e1e1e;font-weight:normal;">mm</div>
<div class="t" style="left:776.0px;top:157.9px;font-size:15.5px;line-height:15.5px;color:#1e1e1e;font-weight:normal;">mm</div>
<div class="t" style="left:824.0px;top:128.9px;font-size:15.5px;line-height:15.5px;color:#1e1e1e;font-weight:normal;">Width:</div>
<div class="t" style="left:824.0px;top:157.9px;font-size:15.5px;line-height:15.5px;color:#1e1e1e;font-weight:normal;">Height:</div>
<div class="b" style="left:884px;top:126px;width:72px;height:25px;background:#fff;border-bottom:1px solid #c8c8c8"></div>
<div class="t" style="left:890.0px;top:131.0px;font-size:15.5px;line-height:15.5px;color:#1e1e1e;font-weight:normal;">70.00</div>
<div class="b" style="left:884px;top:154px;width:72px;height:24px;background:#fff;border-bottom:1px solid #c8c8c8"></div>
<div class="t" style="left:890.0px;top:158.5px;font-size:15.5px;line-height:15.5px;color:#1e1e1e;font-weight:normal;">81.99</div>
<div class="t" style="left:962.0px;top:128.9px;font-size:15.5px;line-height:15.5px;color:#1e1e1e;font-weight:normal;">mm</div>
<div class="t" style="left:962.0px;top:157.9px;font-size:15.5px;line-height:15.5px;color:#1e1e1e;font-weight:normal;">mm</div>
<div class="b" style="left:1006px;top:126px;width:72px;height:25px;background:#fff;border-bottom:1px solid #c8c8c8"></div>
<div class="t" style="left:1012.0px;top:131.0px;font-size:15.5px;line-height:15.5px;color:#1e1e1e;font-weight:normal;">100.00</div>
<div class="b" style="left:1006px;top:154px;width:72px;height:24px;background:#fff;border-bottom:1px solid #c8c8c8"></div>
<div class="t" style="left:1012.0px;top:158.5px;font-size:15.5px;line-height:15.5px;color:#1e1e1e;font-weight:normal;">100.00</div>
<div class="t" style="left:1085.0px;top:128.9px;font-size:15.5px;line-height:15.5px;color:#1e1e1e;font-weight:normal;">%</div>
<div class="t" style="left:1085.0px;top:157.9px;font-size:15.5px;line-height:15.5px;color:#1e1e1e;font-weight:normal;">%</div>
<svg class="b" style="left:1110px;top:133px" width="36" height="36" viewBox="0 0 36 36"><path d="M1 1 H16 V8 M1 35 H16 V28" stroke="#222" stroke-width="1.6" fill="none"/><rect x="12" y="14" width="22" height="18" fill="#b8cfe0" stroke="#222" stroke-width="2"/><path d="M17 14 V9 Q17 4 22 4 Q27 4 27 9" stroke="#222" stroke-width="2" fill="none"/><rect x="20" y="20" width="5" height="6" fill="#222"/></svg>
<div class="b" style="left:1738px;top:127px;width:46px;height:44px;background:#fff;border:1px solid #c0c0c0"></div>
<div class="t" style="left:1744.0px;top:138.5px;font-size:16px;line-height:16px;color:#1e1e1e;font-weight:normal;">0</div>
<div class="t" style="left:1788.0px;top:140.5px;font-size:16px;line-height:16px;color:#333;font-weight:normal;">°</div>
<div class="b" style="left:1850px;top:127px;width:37px;height:44px;background:#fff;border:1px solid #c0c0c0"></div>
<div class="t" style="left:1856.0px;top:138.5px;font-size:16px;line-height:16px;color:#1e1e1e;font-weight:normal;">0</div>
<div class="t" style="left:1893.0px;top:140.5px;font-size:16px;line-height:16px;color:#333;font-weight:normal;">°</div>
<div class="b" style="left:2641px;top:60px;width:126px;height:33px;background:#fff;border:1px solid #a8a8a8"></div>
<div class="t" style="left:2648.0px;top:69.0px;font-size:16.5px;line-height:16.5px;color:#1e1e1e;font-weight:normal;">100</div>
<svg class="b" style="left:2751px;top:74px" width="9" height="5" viewBox="0 0 9 5"><path d="M0 0 H9 L4.5 5 Z" fill="#555"/></svg>
<div class="t" style="left:2772.0px;top:70.0px;font-size:16.5px;line-height:16.5px;color:#333;font-weight:normal;">%</div>
<div class="b" style="left:0px;top:187px;width:428px;height:1547px;background:#5ac6c6"></div>
<div class="b" style="left:3px;top:228px;width:417px;height:1501px;background:#ececec"></div>
<div class="t" style="left:16.0px;top:201.6px;font-size:17px;line-height:17px;color:#2a3434;font-weight:bold;">Toolboxes</div>
<div class="b" style="left:6px;top:232px;width:411px;height:45px;background:#efefef;border:2px solid #a9a9a9"></div>
<svg class="b" style="left:19px;top:246.5px" width="10" height="15" viewBox="0 0 10 15"><path d="M1 1 L9 7.5 L1 14 Z" fill="none" stroke="#3a7aa8" stroke-width="1.4"/></svg>
<div class="t" style="left:41.0px;top:246.6px;font-size:17px;line-height:17px;color:#222;font-weight:bold;">Manage Designs</div>
<div class="b" style="left:6px;top:279px;width:411px;height:44px;background:#efefef;border:2px solid #a9a9a9"></div>
<svg class="b" style="left:19px;top:293.0px" width="10" height="15" viewBox="0 0 10 15"><path d="M1 1 L9 7.5 L1 14 Z" fill="none" stroke="#3a7aa8" stroke-width="1.4"/></svg>
<div class="t" style="left:41.0px;top:293.1px;font-size:17px;line-height:17px;color:#222;font-weight:bold;">Customize Design</div>
<div class="b" style="left:6px;top:325px;width:411px;height:45px;background:#efefef;border:2px solid #a9a9a9"></div>
<svg class="b" style="left:19px;top:339.5px" width="10" height="15" viewBox="0 0 10 15"><path d="M1 1 L9 7.5 L1 14 Z" fill="none" stroke="#3a7aa8" stroke-width="1.4"/></svg>
<div class="t" style="left:41.0px;top:339.6px;font-size:17px;line-height:17px;color:#222;font-weight:bold;">Lettering / Monogramming</div>
<div class="b" style="left:6px;top:372px;width:411px;height:45px;background:#efefef;border:2px solid #a9a9a9"></div>
<svg class="b" style="left:19px;top:386.5px" width="10" height="15" viewBox="0 0 10 15"><path d="M1 1 L9 7.5 L1 14 Z" fill="none" stroke="#3a7aa8" stroke-width="1.4"/></svg>
<div class="t" style="left:41.0px;top:386.6px;font-size:17px;line-height:17px;color:#222;font-weight:bold;">Artwork</div>
<div class="b" style="left:6px;top:419px;width:411px;height:45px;background:#efefef;border:2px solid #a9a9a9"></div>
<svg class="b" style="left:19px;top:433.5px" width="10" height="15" viewBox="0 0 10 15"><path d="M1 1 L9 7.5 L1 14 Z" fill="none" stroke="#3a7aa8" stroke-width="1.4"/></svg>
<div class="t" style="left:41.0px;top:433.6px;font-size:17px;line-height:17px;color:#222;font-weight:bold;">Auto-Digitize</div>
<div class="b" style="left:6px;top:466px;width:411px;height:44px;background:#efefef;border:2px solid #a9a9a9"></div>
<svg class="b" style="left:19px;top:480.0px" width="10" height="15" viewBox="0 0 10 15"><path d="M1 1 L9 7.5 L1 14 Z" fill="none" stroke="#3a7aa8" stroke-width="1.4"/></svg>
<div class="t" style="left:41.0px;top:480.1px;font-size:17px;line-height:17px;color:#222;font-weight:bold;">Edit Objects</div>
<div class="b" style="left:6px;top:512px;width:411px;height:44px;background:#efefef;border:2px solid #a9a9a9"></div>
<svg class="b" style="left:19px;top:529.0px" width="11" height="10" viewBox="0 0 11 10"><path d="M10 0 V10 H0 Z" fill="#1f5f86"/></svg>
<div class="t" style="left:41.0px;top:526.1px;font-size:17px;line-height:17px;color:#222;font-weight:bold;">Digitize</div>
<div class="b" style="left:6px;top:1528px;width:411px;height:43px;background:#efefef;border:2px solid #a9a9a9"></div>
<svg class="b" style="left:19px;top:1541.5px" width="10" height="15" viewBox="0 0 10 15"><path d="M1 1 L9 7.5 L1 14 Z" fill="none" stroke="#3a7aa8" stroke-width="1.4"/></svg>
<div class="t" style="left:41.0px;top:1541.6px;font-size:17px;line-height:17px;color:#222;font-weight:bold;">Appliqué</div>
<div class="b" style="left:6px;top:1575px;width:411px;height:42px;background:#efefef;border:2px solid #a9a9a9"></div>
<svg class="b" style="left:19px;top:1588.0px" width="10" height="15" viewBox="0 0 10 15"><path d="M1 1 L9 7.5 L1 14 Z" fill="none" stroke="#3a7aa8" stroke-width="1.4"/></svg>
<div class="t" style="left:41.0px;top:1588.1px;font-size:17px;line-height:17px;color:#222;font-weight:bold;">Create Layouts</div>
<div class="b" style="left:6px;top:1621px;width:411px;height:43px;background:#efefef;border:2px solid #a9a9a9"></div>
<svg class="b" style="left:19px;top:1634.5px" width="10" height="15" viewBox="0 0 10 15"><path d="M1 1 L9 7.5 L1 14 Z" fill="none" stroke="#3a7aa8" stroke-width="1.4"/></svg>
<div class="t" style="left:41.0px;top:1634.6px;font-size:17px;line-height:17px;color:#222;font-weight:bold;">Multi-Hooping</div>
<div class="b" style="left:6px;top:1667px;width:411px;height:43px;background:#efefef;border:2px solid #a9a9a9"></div>
<svg class="b" style="left:19px;top:1680.5px" width="10" height="15" viewBox="0 0 10 15"><path d="M1 1 L9 7.5 L1 14 Z" fill="none" stroke="#3a7aa8" stroke-width="1.4"/></svg>
<div class="t" style="left:41.0px;top:1680.6px;font-size:17px;line-height:17px;color:#222;font-weight:bold;">Output Design</div>
<svg class="b" style="left:41px;top:566px" width="36" height="36" viewBox="0 0 36 36"><rect x="1" y="1" width="34" height="34" fill="none" stroke="#333" stroke-width="2.2"/></svg>
<div class="t" style="left:87.5px;top:575.8px;font-size:17px;line-height:17px;color:#2a2a2a;font-weight:normal;">Rectangle / Square</div>
<svg class="b" style="left:41px;top:611px" width="36" height="36" viewBox="0 0 36 36"><circle cx="18" cy="18" r="16.5" fill="none" stroke="#333" stroke-width="2.2"/></svg>
<div class="t" style="left:87.5px;top:620.8px;font-size:17px;line-height:17px;color:#2a2a2a;font-weight:normal;">Circle / Oval</div>
<svg class="b" style="left:41px;top:656px" width="36" height="36" viewBox="0 0 36 36"><path d="M18 14 Q8 6 11 2 Q14 -1 18 4 Q22 -1 25 2 Q28 6 18 14 Z" fill="none" stroke="#333" stroke-width="1.6"/><path d="M1 35 L8 20 L15 35 Z" fill="none" stroke="#333" stroke-width="1.6"/><path d="M22 22 H28 V26 H34 V32 H28 V35 H22 V32 H17 V26 H22 Z" fill="none" stroke="#333" stroke-width="1.6"/></svg>
<div class="t" style="left:87.5px;top:665.8px;font-size:17px;line-height:17px;color:#2a2a2a;font-weight:normal;">Standard Shapes...</div>
<svg class="b" style="left:41px;top:709px" width="36" height="36" viewBox="0 0 36 36"><circle cx="8" cy="7" r="6" fill="none" stroke="#333" stroke-width="1.6"/><path d="M8 1 V13 M2 7 H14" stroke="#333" stroke-width="1.2"/><path d="M11 12 Q16 18 10 22 Q6 27 14 30 Q20 30 22 24 Q28 34 35 34" fill="none" stroke="#333" stroke-width="2"/></svg>
<div class="t" style="left:87.5px;top:718.8px;font-size:17px;line-height:17px;color:#2a2a2a;font-weight:normal;">Freehand Open Shape</div>
<svg class="b" style="left:41px;top:754px" width="36" height="36" viewBox="0 0 36 36"><circle cx="8" cy="7" r="6" fill="none" stroke="#333" stroke-width="1.6"/><path d="M8 1 V13 M2 7 H14" stroke="#333" stroke-width="1.2"/><path d="M10 13 Q20 10 22 16 Q36 18 34 28 Q32 36 24 34 Q22 26 18 28 Q14 30 12 24 Q8 18 10 13" fill="none" stroke="#333" stroke-width="2"/></svg>
<div class="t" style="left:87.5px;top:763.8px;font-size:17px;line-height:17px;color:#2a2a2a;font-weight:normal;">Freehand Closed Shape</div>
<svg class="b" style="left:41px;top:806px" width="36" height="36" viewBox="0 0 36 36"><path d="M1 8.5 H35 L25 19.5 L28.3 29.3 L17.4 22.7 L6.5 29.3 L10.8 19.5 Z" fill="none" stroke="#333" stroke-width="2" stroke-linejoin="miter"/></svg>
<div class="t" style="left:87.5px;top:815.8px;font-size:17px;line-height:17px;color:#2a2a2a;font-weight:normal;">Digitize Open Shape</div>
<svg class="b" style="left:41px;top:852px" width="36" height="36" viewBox="0 0 36 36"><path d="M18 1 L22 12 H35 L25 20 L29 34 L18 26 L7 34 L11 20 L1 12 H14 Z" fill="none" stroke="#333" stroke-width="2"/></svg>
<div class="t" style="left:87.5px;top:861.8px;font-size:17px;line-height:17px;color:#2a2a2a;font-weight:normal;">Digitize Closed Shape</div>
<svg class="b" style="left:41px;top:904px" width="36" height="36" viewBox="0 0 36 36"><path d="M2.1 32.7 L8.6 17.5 Q12 10 17.4 7.7 L32.6 2.2 V24 L25 25.1 L17.4 28.4 L10.8 32.7 Z M8.6 17.5 L17.4 28.4 M17.4 7.7 L25 25.1" fill="none" stroke="#333" stroke-width="1.8"/><g fill="#e04848"><rect x="-0.2" y="30.4" width="4.6" height="4.6"/><rect x="8.5" y="30.4" width="4.6" height="4.6"/><rect x="15.1" y="26.1" width="4.6" height="4.6"/><rect x="22.7" y="22.8" width="4.6" height="4.6"/><rect x="30.3" y="21.7" width="4.6" height="4.6"/><rect x="30.3" y="-0.1" width="4.6" height="4.6"/><rect x="15.1" y="5.4" width="4.6" height="4.6"/><rect x="6.3" y="15.2" width="4.6" height="4.6"/></g></svg>
<div class="t" style="left:87.5px;top:913.8px;font-size:17px;line-height:17px;color:#2a2a2a;font-weight:normal;">Digitize Blocks</div>
<svg class="b" style="left:41px;top:957px" width="36" height="36" viewBox="0 0 36 36"><path d="M14 14 Q10 2 18 1 Q26 2 22 14 Q21 19 24 22 H12 Q15 19 14 14 Z" fill="#3a98a8" stroke="#333" stroke-width="0.8"/><rect x="2" y="23" width="32" height="12" rx="2" fill="#333"/></svg>
<div class="t" style="left:87.5px;top:966.8px;font-size:17px;line-height:17px;color:#2a2a2a;font-weight:normal;">Carving Stamp >></div>
<svg class="b" style="left:41px;top:1002px" width="36" height="36" viewBox="0 0 36 36"><rect x="1" y="1" width="5" height="5" fill="none" stroke="#333" stroke-width="1.4"/><rect x="30" y="30" width="5" height="5" fill="none" stroke="#333" stroke-width="1.4"/><path d="M5 5 Q18 6 18 18 Q6 18 8 10 M18 18 Q30 18 28 26 Q26 32 18 18 Q18 6 26 8 Q32 12 18 18 Q14 30 8 26 Q6 20 18 18" fill="none" stroke="#333" stroke-width="1.8"/></svg>
<div class="t" style="left:87.5px;top:1011.8px;font-size:17px;line-height:17px;color:#2a2a2a;font-weight:normal;">Motif Stamp...</div>
<svg class="b" style="left:41px;top:1054px" width="36" height="36" viewBox="0 0 36 36"><path d="M2 2 V30 M2 10 H14 L6 22 H20 L10 34 M26 2 V16 M19 9 H33" stroke="#9a9a9a" stroke-width="2" fill="none"/></svg>
<div class="t" style="left:87.5px;top:1063.8px;font-size:17px;line-height:17px;color:#8e8e8e;font-weight:normal;">Add Stitch Angles</div>
<svg class="b" style="left:41px;top:1099px" width="36" height="36" viewBox="0 0 36 36"><path d="M2 2 Q14 4 18 14 Q22 26 20 35 M2 16 Q10 12 16 35 M2 28 Q16 14 34 10 M22 8 H34" stroke="#9a9a9a" stroke-width="2" fill="none"/></svg>
<div class="t" style="left:87.5px;top:1108.8px;font-size:17px;line-height:17px;color:#8e8e8e;font-weight:normal;">Remove Stitch Angles</div>
<svg class="b" style="left:41px;top:1151px" width="36" height="36" viewBox="0 0 36 36"><ellipse cx="18" cy="29" rx="15" ry="6" fill="#9a9a9a"/><ellipse cx="18" cy="29" rx="7" ry="2.5" fill="#d0d0d0"/><path d="M18 1 V13 M12 7 H24" stroke="#bbb" stroke-width="2.4"/></svg>
<div class="t" style="left:87.5px;top:1160.8px;font-size:17px;line-height:17px;color:#8e8e8e;font-weight:normal;">Digitize Holes</div>
<svg class="b" style="left:41px;top:1196px" width="36" height="36" viewBox="0 0 36 36"><ellipse cx="18" cy="29" rx="15" ry="6" fill="#9a9a9a"/><ellipse cx="18" cy="29" rx="7" ry="2.5" fill="#d0d0d0"/><path d="M16 10 L24 4 L32 12 L24 20 Z" fill="#fff" stroke="#9a9a9a" stroke-width="1.6"/><path d="M22 1 V12" stroke="#9a9a9a" stroke-width="1.6"/><path d="M8 22 Q10 14 16 14" stroke="#9a9a9a" stroke-width="4" fill="none"/></svg>
<div class="t" style="left:87.5px;top:1205.8px;font-size:17px;line-height:17px;color:#8e8e8e;font-weight:normal;">Fill Holes</div>
<svg class="b" style="left:41px;top:1242px" width="36" height="36" viewBox="0 0 36 36"><ellipse cx="18" cy="27" rx="15" ry="6" fill="#9a9a9a"/><ellipse cx="18" cy="27" rx="7" ry="2.5" fill="#d0d0d0"/><path d="M13 9 H23" stroke="#bbb" stroke-width="3"/></svg>
<div class="t" style="left:87.5px;top:1251.8px;font-size:17px;line-height:17px;color:#8e8e8e;font-weight:normal;">Remove Holes</div>
<svg class="b" style="left:41px;top:1286px" width="36" height="36" viewBox="0 0 36 36"><rect x="1" y="1" width="20" height="20" fill="none" stroke="#9a9a9a" stroke-width="1.8"/><circle cx="22" cy="22" r="12" fill="none" stroke="#9a9a9a" stroke-width="1.8"/><path d="M10 22 V21 M22 10 H21" stroke="#9a9a9a" stroke-dasharray="2 2"/></svg>
<div class="t" style="left:87.5px;top:1295.8px;font-size:17px;line-height:17px;color:#8e8e8e;font-weight:normal;">Weld</div>
<svg class="b" style="left:41px;top:1339px" width="36" height="36" viewBox="0 0 36 36"><path d="M2 4 Q18 26 34 4" stroke="#e04848" stroke-width="2.4" fill="none"/><path d="M16 14 L24 10 L22 18 Z" fill="#e04848"/><path d="M2 14 Q4 34 18 34 Q32 34 34 14" stroke="#333" stroke-width="2.6" fill="none"/><path d="M16 28 L24 34 L16 36 Z" fill="#333"/></svg>
<div class="t" style="left:87.5px;top:1348.8px;font-size:17px;line-height:17px;color:#2a2a2a;font-weight:normal;">Backtrack</div>
<svg class="b" style="left:41px;top:1383px" width="36" height="36" viewBox="0 0 36 36"><ellipse cx="18" cy="14" rx="16" ry="10" stroke="#e04848" stroke-width="2.4" fill="none"/><path d="M2 22 Q2 35 18 35 Q34 35 34 22" stroke="#333" stroke-width="2.6" fill="none"/><path d="M6 18 Q18 10 30 18" stroke="#333" stroke-width="2.4" fill="none"/><path d="M22 12 L30 16 L22 20 Z" fill="#333"/></svg>
<div class="t" style="left:87.5px;top:1392.8px;font-size:17px;line-height:17px;color:#2a2a2a;font-weight:normal;">Repeat</div>
<svg class="b" style="left:41px;top:1437px" width="36" height="36" viewBox="0 0 36 36"><path d="M18 30 V6 M18 20 L8 10 M18 16 L28 6 M18 24 L10 18 M12 12 L8 4 M24 10 L30 14" stroke="#333" stroke-width="1.6" fill="none"/><path d="M26 2 V10 M22 6 H30" stroke="#e04848" stroke-width="2"/><path d="M18 26 L23 31 L18 36 L13 31 Z" fill="none" stroke="#2a9a70" stroke-width="2"/></svg>
<div class="t" style="left:87.5px;top:1446.8px;font-size:17px;line-height:17px;color:#2a2a2a;font-weight:normal;">Branching</div>
<svg class="b" style="left:41px;top:1481px" width="36" height="36" viewBox="0 0 36 36"><path d="M4 10 Q2 2 10 3 Q18 -1 24 4 Q34 2 33 12 Q36 20 30 26 Q30 34 20 32 Q12 36 8 30 Q0 28 3 20 Q0 14 4 10 Z M9 9 Q14 14 10 20 Q14 26 20 24 Q26 28 28 20 Q24 14 28 10 Q20 6 16 12" fill="none" stroke="#e06060" stroke-width="1.6"/><path d="M27 26 L31 30 L27 34 L23 30 Z" fill="#2a9a70"/><circle cx="27" cy="30" r="2" fill="#e04848"/></svg>
<div class="t" style="left:87.5px;top:1490.8px;font-size:17px;line-height:17px;color:#2a2a2a;font-weight:normal;">Redwork</div>
<div class="b" style="left:6px;top:698px;width:410px;height:2px;background:#b4b4b4;border-bottom:1px solid #fafafa"></div>
<div class="b" style="left:6px;top:797px;width:410px;height:2px;background:#b4b4b4;border-bottom:1px solid #fafafa"></div>
<div class="b" style="left:6px;top:894px;width:410px;height:2px;background:#b4b4b4;border-bottom:1px solid #fafafa"></div>
<div class="b" style="left:6px;top:947px;width:410px;height:2px;background:#b4b4b4;border-bottom:1px solid #fafafa"></div>
<div class="b" style="left:6px;top:1045px;width:410px;height:2px;background:#b4b4b4;border-bottom:1px solid #fafafa"></div>
<div class="b" style="left:6px;top:1142px;width:410px;height:2px;background:#b4b4b4;border-bottom:1px solid #fafafa"></div>
<div class="b" style="left:6px;top:1330px;width:410px;height:2px;background:#b4b4b4;border-bottom:1px solid #fafafa"></div>
<div class="b" style="left:6px;top:1427px;width:410px;height:2px;background:#b4b4b4;border-bottom:1px solid #fafafa"></div>
<div class="b" style="left:425px;top:186px;width:1604px;height:1547px;background:#c6dcf1"></div>
<div class="b" style="left:425px;top:186px;width:1604px;height:29px;background:#f0f0f0"></div>
<div class="b" style="left:428px;top:215px;width:1601px;height:2px;background:#d0d0d0"></div>
<div class="b" style="left:429px;top:191px;width:153px;height:26px;background:#f4f4f4;border:1px solid #c8c8c8;border-bottom:none;border-radius:3px 3px 0 0"></div>
<div class="t" style="left:437.0px;top:195.6px;font-size:17px;line-height:17px;color:#333;font-weight:normal;">Design Library</div>
<svg class="b" style="left:565px;top:197px" width="13" height="13" viewBox="0 0 13 13"><path d="M1.5 1.5 L11.5 11.5 M11.5 1.5 L1.5 11.5" stroke="#1a1a1a" stroke-width="2"/></svg>
<div class="b" style="left:582px;top:191px;width:104px;height:26px;background:#c9def2;border:1px solid #b8cce0;border-bottom:none;border-radius:3px 3px 0 0"></div>
<div class="t" style="left:589.0px;top:195.6px;font-size:17px;line-height:17px;color:#223;font-weight:normal;">Design1</div>
<svg class="b" style="left:665px;top:197px" width="13" height="13" viewBox="0 0 13 13"><path d="M1.5 1.5 L11.5 11.5 M11.5 1.5 L1.5 11.5" stroke="#1a1a1a" stroke-width="2"/></svg>
<svg class="b" style="left:1990px;top:192px" width="10" height="14" viewBox="0 0 10 14"><path d="M9 1 L1 7 L9 13 Z" fill="none" stroke="#555" stroke-width="1.2"/></svg>
<svg class="b" style="left:2014px;top:192px" width="10" height="14" viewBox="0 0 10 14"><path d="M1 1 L9 7 L1 13 Z" fill="none" stroke="#555" stroke-width="1.2"/></svg>
<div class="b" style="left:431px;top:222px;width:1593px;height:1505px;background:#f0f0f0"></div>
<div class="b" style="left:431px;top:222px;width:1566px;height:1477px;background:#777"></div>
<div class="b" style="left:434px;top:225px;width:1561px;height:1474px;background:#c0c0c0"></div>
<div class="b" style="left:1995px;top:225px;width:2px;height:1474px;background:#fff"></div>
<div class="b" style="left:1995px;top:225px;width:26px;height:10px;background:#f8f8f8;border:2px solid #777;border-top:none;border-left:none"></div>
<div class="b" style="left:2006px;top:939px;width:5px;height:33px;background:#808080"></div>
<div class="b" style="left:431px;top:1699px;width:1566px;height:2px;background:#fff"></div>
<div class="b" style="left:432px;top:1699px;width:12px;height:26px;background:#f8f8f8;border:2px solid #777;border-top:none;border-left:none"></div>
<div class="b" style="left:1181px;top:1711px;width:35px;height:3px;background:#808080"></div>
<svg class="b" style="left:2004px;top:1708px" width="14" height="14" viewBox="0 0 14 14"><g fill="#9a9a9a"><rect x="10" y="0" width="3" height="3"/><rect x="5" y="5" width="3" height="3"/><rect x="10" y="5" width="3" height="3"/><rect x="0" y="10" width="3" height="3"/><rect x="5" y="10" width="3" height="3"/><rect x="10" y="10" width="3" height="3"/></g></svg>
<div class="b" style="left:2029px;top:186px;width:7px;height:1549px;background:#cdcdcd"></div>
<svg class="b" style="left:0;top:0" width="2818" height="1843"><path d="M818,698 C818,656 905,590 1043,590 C1181,590 1268,656 1268,698 L1268,994 C1268,1063 1155,1065.6 1043,1116 C931,1065.6 818,1063 818,994 Z" fill="none" stroke="#cf3474" stroke-width="3"/><path d="M818,698 C818,656 905,590 1043,590 C1181,590 1268,656 1268,698 L1268,994 C1268,1063 1155,1065.6 1043,1116 C931,1065.6 818,1063 818,994 Z" fill="none" stroke="#8a2848" stroke-width="3.6" stroke-dasharray="4 12"/><path d="M818,698 C818,656 905,590 1043,590 C1181,590 1268,656 1268,698 L1268,994 C1268,1063 1155,1065.6 1043,1116 C931,1065.6 818,1063 818,994 Z" fill="none" stroke="#f060a8" stroke-width="1.2" stroke-dasharray="5 11" stroke-dashoffset="8"/><rect x="813.5" y="585.5" width="9" height="9" fill="none" stroke="#444" stroke-width="1.4"/><rect x="1263.5" y="585.5" width="9" height="9" fill="none" stroke="#444" stroke-width="1.4"/><rect x="813.5" y="1111.5" width="9" height="9" fill="none" stroke="#444" stroke-width="1.4"/><rect x="1263.5" y="1111.5" width="9" height="9" fill="none" stroke="#444" stroke-width="1.4"/><path d="M1038,590 L1043,585 L1048,590 L1043,595 Z" fill="none" stroke="#555" stroke-width="1"/><path d="M813,853 L818,848 L823,853 L818,858 Z" fill="none" stroke="#555" stroke-width="1"/><path d="M1263,853 L1268,848 L1273,853 L1268,858 Z" fill="none" stroke="#555" stroke-width="1"/><path d="M1038,1116 L1043,1111 L1048,1116 L1043,1121 Z" fill="none" stroke="#555" stroke-width="1"/><circle cx="1043" cy="853" r="10" fill="none" stroke="#444" stroke-width="1.3"/><rect x="1040" y="850" width="6" height="6" fill="#333"/><path d="M643,347 L437,185" stroke="#e8141c" stroke-width="4.5" stroke-linecap="round"/><path d="M424,172 L445.5,176.5 L433.5,192.5 Z" fill="#e8141c"/></svg>
<div class="b" style="left:2036px;top:187px;width:243px;height:1548px;background:#ececec"></div>
<div class="t" style="left:2045.0px;top:198.6px;font-size:17px;line-height:17px;color:#2a2a2a;font-weight:bold;">Sequence</div>
<svg class="b" style="left:2255px;top:201px" width="13" height="11" viewBox="0 0 13 11"><path d="M1 1 L5.5 5.5 L1 10 M7 1 L11.5 5.5 L7 10" stroke="#111" stroke-width="2.4" fill="none"/></svg>
<div class="b" style="left:2036px;top:225px;width:243px;height:52px;background:#e9e9e9"></div>
<div class="b" style="left:2040px;top:230px;width:9px;height:95px;background-image:radial-gradient(circle at 1.5px 1.5px,#a0a0a0 0.9px,transparent 1.3px),radial-gradient(circle at 1.5px 1.5px,#a0a0a0 0.9px,transparent 1.3px);background-size:6px 6px,6px 6px;background-position:0 0,3px 3px;"></div>
<svg class="b" style="left:2056px;top:232px" width="36" height="36" viewBox="0 0 36 36"><path d="M17 2 L4 18 L17 34 M33 2 L20 18 L33 34" stroke="#3a3a3a" stroke-width="4.5" fill="none"/></svg>
<div class="b" style="left:2096px;top:227px;width:45px;height:45px;background:#c9def2"></div>
<svg class="b" style="left:2101px;top:232px" width="36" height="36" viewBox="0 0 36 36"><path d="M3 2 L16 18 L3 34 M19 2 L32 18 L19 34" stroke="#3a3a3a" stroke-width="4.5" fill="none"/></svg>
<div class="b" style="left:2051px;top:277px;width:226px;height:2px;background:#d6d6d6;border-bottom:1px solid #fafafa"></div>
<div class="b" style="left:2051px;top:281px;width:72px;height:45px;background:#c9def2"></div>
<div class="t" style="left:2057.0px;top:295.6px;font-size:17px;line-height:17px;color:#333;font-weight:normal;">Objects</div>
<div class="t" style="left:2129.0px;top:295.6px;font-size:17px;line-height:17px;color:#333;font-weight:normal;">Colors</div>
<div class="b" style="left:2036px;top:327px;width:243px;height:3px;background:#d8d8d8"></div>
<div class="t" style="left:2066.0px;top:344.9px;font-size:15.5px;line-height:15.5px;color:#222;font-weight:normal;">#</div>
<div class="t" style="left:2103.0px;top:344.9px;font-size:15.5px;line-height:15.5px;color:#222;font-weight:normal;">Object</div>
<div class="t" style="left:2164.0px;top:344.9px;font-size:15.5px;line-height:15.5px;color:#222;font-weight:normal;">Status</div>
<div class="b" style="left:2045px;top:370px;width:225px;height:1249px;background:#fff;border-left:2px solid #707070;border-top:2px solid #707070"></div>
<div class="b" style="left:2047px;top:434px;width:223px;height:2px;background:#c4c4c4"></div>
<div class="b" style="left:2047px;top:494px;width:223px;height:2px;background:#c4c4c4"></div>
<div class="b" style="left:2047px;top:554px;width:223px;height:2px;background:#c4c4c4"></div>
<div class="b" style="left:2047px;top:614px;width:223px;height:2px;background:#c4c4c4"></div>
<div class="b" style="left:2047px;top:674px;width:223px;height:2px;background:#c4c4c4"></div>
<div class="b" style="left:2047px;top:734px;width:223px;height:2px;background:#c4c4c4"></div>
<div class="b" style="left:2047px;top:794px;width:223px;height:2px;background:#c4c4c4"></div>
<div class="b" style="left:2047px;top:854px;width:223px;height:2px;background:#c4c4c4"></div>
<div class="b" style="left:2047px;top:914px;width:223px;height:2px;background:#c4c4c4"></div>
<div class="b" style="left:2047px;top:974px;width:223px;height:2px;background:#c4c4c4"></div>
<div class="b" style="left:2047px;top:1034px;width:223px;height:2px;background:#c4c4c4"></div>
<div class="b" style="left:2047px;top:1094px;width:223px;height:2px;background:#c4c4c4"></div>
<div class="b" style="left:2047px;top:1154px;width:223px;height:2px;background:#c4c4c4"></div>
<div class="b" style="left:2047px;top:1214px;width:223px;height:2px;background:#c4c4c4"></div>
<div class="b" style="left:2047px;top:1274px;width:223px;height:2px;background:#c4c4c4"></div>
<div class="b" style="left:2047px;top:1334px;width:223px;height:2px;background:#c4c4c4"></div>
<div class="b" style="left:2047px;top:1394px;width:223px;height:2px;background:#c4c4c4"></div>
<div class="b" style="left:2047px;top:1454px;width:223px;height:2px;background:#c4c4c4"></div>
<div class="b" style="left:2047px;top:1514px;width:223px;height:2px;background:#c4c4c4"></div>
<div class="b" style="left:2047px;top:1574px;width:223px;height:2px;background:#c4c4c4"></div>
<div class="b" style="left:2162px;top:372px;width:2px;height:1247px;background:#c4c4c4"></div>
<div class="b" style="left:2220px;top:372px;width:2px;height:1247px;background:#c4c4c4"></div>
<div class="b" style="left:2047px;top:372px;width:223px;height:2px;background:#f4f4f4"></div>
<div class="t" style="left:2071.0px;top:397.5px;font-size:16px;line-height:16px;color:#222;font-weight:normal;">1</div>
<div class="b" style="left:2101px;top:377px;width:58px;height:54px;background:#06080c"></div>
<div class="b" style="left:2108px;top:384px;width:44px;height:40px;background:#fff"></div>
<svg class="b" style="left:2107px;top:381px" width="42" height="46" viewBox="0 0 42 46"><path d="M4 8 Q20 -2 38 8 L38 36 Q20 46 4 36 Z" fill="none" stroke="#b02020" stroke-width="1.2"/></svg>
<div class="b" style="left:2270px;top:370px;width:9px;height:1252px;background:#e8e8e8"></div>
<div class="b" style="left:2036px;top:1619px;width:243px;height:11px;background:#e8e8e8"></div>
<div class="b" style="left:2037px;top:1630px;width:242px;height:103px;background:#e9e9e9;border-top:2px solid #dadada"></div>
<div class="b" style="left:2040px;top:1636px;width:9px;height:92px;background-image:radial-gradient(circle at 1.5px 1.5px,#a0a0a0 0.9px,transparent 1.3px),radial-gradient(circle at 1.5px 1.5px,#a0a0a0 0.9px,transparent 1.3px);background-size:6px 6px,6px 6px;background-position:0 0,3px 3px;"></div>
<svg class="b" style="left:2055px;top:1638px" width="37" height="34" viewBox="0 0 37 34"><rect x="0" y="0" width="37" height="5" fill="#7a7a7a"/><path d="M18.5 4 L36 34 H1 Z" fill="#7a7a7a"/></svg>
<svg class="b" style="left:2100px;top:1638px" width="37" height="34" viewBox="0 0 37 34"><path d="M18.5 1 L37 34 H0 Z" fill="#7a7a7a"/></svg>
<svg class="b" style="left:2146px;top:1638px" width="37" height="34" viewBox="0 0 37 34"><path d="M0 0 H37 L18.5 33 Z" fill="#7a7a7a"/></svg>
<svg class="b" style="left:2190px;top:1638px" width="37" height="34" viewBox="0 0 37 34"><path d="M1 0 H36 L18.5 29 Z" fill="#7a7a7a"/><rect x="0" y="29" width="37" height="5" fill="#7a7a7a"/></svg>
<div class="b" style="left:2051px;top:1680px;width:226px;height:2px;background:#d6d6d6;border-bottom:1px solid #fafafa"></div>
<div class="t" style="left:2054.0px;top:1692.8px;font-size:18px;line-height:18px;color:#7a7a7a;font-weight:bold;">123</div>
<svg class="b" style="left:2068px;top:1707px" width="18" height="18" viewBox="0 0 18 18"><path d="M0 0 L14 6 L9 8 L16 15 L14 17 L7 10 L5 15 Z" fill="#9a9a9a"/></svg>
<svg class="b" style="left:2100px;top:1688px" width="40" height="40" viewBox="0 0 40 40"><rect x="0" y="0" width="7" height="7" fill="#c8c8c8"/><rect x="0" y="10" width="7" height="7" fill="#8a8a8a"/><rect x="0" y="20" width="7" height="7" fill="#b8b8b8"/><path d="M10 1 H17 L13.5 6 Z" fill="#444"/><path d="M10 26 H17 L13.5 21 Z" fill="#444"/><path d="M16 10 L30 16 L25 18 L32 25 L30 27 L23 20 L21 25 Z" fill="#9a9a9a"/></svg>
<div class="b" style="left:2279px;top:187px;width:6px;height:1548px;background:#cdcdcd"></div>
<div class="b" style="left:2285px;top:187px;width:509px;height:1548px;background:#ececec"></div>
<div class="t" style="left:2294.0px;top:198.6px;font-size:17px;line-height:17px;color:#2a2a2a;font-weight:bold;">Object Properties</div>
<svg class="b" style="left:2766px;top:200px" width="13" height="11" viewBox="0 0 13 11"><path d="M1 1 L5.5 5.5 L1 10 M7 1 L11.5 5.5 L7 10" stroke="#111" stroke-width="2.4" fill="none"/></svg>
<div class="b" style="left:2296px;top:236px;width:71px;height:34px;background:#c9def2"></div>
<div class="t" style="left:2303.0px;top:245.0px;font-size:16.5px;line-height:16.5px;color:#2a3a4a;font-weight:normal;">Outline</div>
<div class="b" style="left:2366px;top:240px;width:2px;height:28px;background:#555"></div>
<div class="t" style="left:2374.0px;top:246.0px;font-size:16.5px;line-height:16.5px;color:#333;font-weight:normal;">Effects</div>
<div class="b" style="left:2434px;top:240px;width:2px;height:28px;background:#555"></div>
<div class="t" style="left:2443.0px;top:246.0px;font-size:16.5px;line-height:16.5px;color:#333;font-weight:normal;">Stitching</div>
<div class="b" style="left:2512px;top:240px;width:2px;height:28px;background:#555"></div>
<div class="b" style="left:2296px;top:267px;width:487px;height:1457px;background:#c9def2;border-right:2px solid #777;border-bottom:2px solid #777"></div>
<div class="b" style="left:2300px;top:272px;width:479px;height:1448px;background:#ebebeb"></div>
<div class="t" style="left:2310.0px;top:288.6px;font-size:17px;line-height:17px;color:#111;font-weight:bold;">Stitch type</div>
<div class="b" style="left:2311px;top:325px;width:462px;height:498px;background:#ebebeb;border:2px solid #cfcfcf;border-right-color:#e4e4e4;border-bottom-color:#d8d8d8"></div>
<div class="b" style="left:2749px;top:330px;width:24px;height:490px;background:#f0f0f0"></div>
<svg class="b" style="left:2752px;top:334px" width="14" height="8" viewBox="0 0 14 8"><path d="M0 8 L7 0 L14 8 Z" fill="#aaa"/></svg>
<svg class="b" style="left:2752px;top:805px" width="14" height="8" viewBox="0 0 14 8"><path d="M0 0 H14 L7 8 Z" fill="#aaa"/></svg>
<div class="b" style="left:2315px;top:330px;width:105px;height:161px;background:#c9def2"></div>
<div class="b" style="left:2320px;top:335px;width:95px;height:151px;background:#ebebeb"></div>
<svg class="b" style="left:0;top:0" width="2818" height="1843"><path d="M2323,338 L2414,426" stroke="#2aa0aa" stroke-width="1.6" /><path d="M2323,338 L2414,426" stroke-width="1.6" stroke="#17666e" stroke-dasharray="1.5 9"/><path d="M2428,338 L2519,426" stroke="#2aa0aa" stroke-width="2.4" /><path d="M2428,338 L2519,426" stroke-width="2.4" stroke="#17666e" stroke-dasharray="2 6"/><path d="M2533,338 L2624,426" stroke="#2aa0aa" stroke-width="1.8" /><path d="M2533,338 L2624,426" stroke-width="1.8" stroke="#17666e" stroke-dasharray="1.5 11"/><g fill="none" stroke="#2aa0aa" stroke-width="1.3" stroke-linejoin="miter"><path d="M2641.3,363.2 L2666.7,337.4 L2692.5,362.2 L2692.5,363.2 L2672.0,384.4 L2656.1,369.2 L2666.7,358.6 L2671.7,363.9 L2668.5,368.9 L2672.8,374.2 L2682.7,363.6 L2666.7,348.0 L2645.9,369.2 L2672.8,394.7 L2691.1,376.6"/><path d="M2693.6,375.6 L2699.6,370.6 L2725.8,396.4 L2704.6,417.3 L2689.4,401.4 L2698.6,390.1 L2704.9,396.4 L2700.0,401.4 L2704.2,405.3 L2715.5,394.7 L2699.6,379.5 L2678.8,401.4 L2703.1,426.5"/></g><path d="M2323,500 L2413,588" stroke="#2aa0aa" stroke-width="2.2" /><path d="M2323,500 L2413,588" stroke-width="3" stroke="#17666e" stroke-dasharray="3 7"/><path d="M2428.0,504.0 l15,6" stroke="#2aa0aa" stroke-width="2.6"/><path d="M2435.0,510.5 l15,6" stroke="#2aa0aa" stroke-width="2.6"/><path d="M2442.0,517.0 l15,6" stroke="#2aa0aa" stroke-width="2.6"/><path d="M2449.0,523.5 l15,6" stroke="#2aa0aa" stroke-width="2.6"/><path d="M2456.0,530.0 l15,6" stroke="#2aa0aa" stroke-width="2.6"/><path d="M2463.0,536.5 l15,6" stroke="#2aa0aa" stroke-width="2.6"/><path d="M2470.0,543.0 l15,6" stroke="#2aa0aa" stroke-width="2.6"/><path d="M2477.0,549.5 l15,6" stroke="#2aa0aa" stroke-width="2.6"/><path d="M2484.0,556.0 l15,6" stroke="#2aa0aa" stroke-width="2.6"/><path d="M2491.0,562.5 l15,6" stroke="#2aa0aa" stroke-width="2.6"/><path d="M2498.0,569.0 l15,6" stroke="#2aa0aa" stroke-width="2.6"/><path d="M2505.0,575.5 l15,6" stroke="#2aa0aa" stroke-width="2.6"/><path d="M2541.5,499.4 L2538.2,510.2 L2548.9,506.7 L2545.7,517.5 L2556.4,514.0 L2553.1,524.8 L2563.9,521.2 L2560.6,532.0 L2571.3,528.5 L2568.1,539.3 L2578.8,535.8 L2575.5,546.6 L2586.2,543.1 L2583.0,553.9 L2593.7,550.3 L2590.4,561.1 L2601.1,557.6 L2597.9,568.4 L2608.6,564.9 L2605.3,575.7 L2616.0,572.1 L2612.8,582.9 L2623.5,579.4" fill="none" stroke="#2aa0aa" stroke-width="1.5"/><path d="M2641,503 L2724,585" stroke="#2aa0aa" stroke-width="9" /><path d="M2641,503 L2724,585" stroke-width="2" stroke="#66c4cc"/><path d="M2325,664 L2410,746" stroke="#2aa0aa" stroke-width="10" /><path d="M2325,664 L2410,746" stroke-width="2" stroke="#66c4cc"/><path d="M2437,662 L2519,743" stroke="#2aa0aa" stroke-width="1.8"/><path d="M2437.0,662.0 l-8,8" stroke="#2aa0aa" stroke-width="2.6"/><path d="M2445.2,670.1 l-8,8" stroke="#2aa0aa" stroke-width="2.6"/><path d="M2453.4,678.2 l-8,8" stroke="#2aa0aa" stroke-width="2.6"/><path d="M2461.6,686.3 l-8,8" stroke="#2aa0aa" stroke-width="2.6"/><path d="M2469.8,694.4 l-8,8" stroke="#2aa0aa" stroke-width="2.6"/><path d="M2478.0,702.5 l-8,8" stroke="#2aa0aa" stroke-width="2.6"/><path d="M2486.2,710.6 l-8,8" stroke="#2aa0aa" stroke-width="2.6"/><path d="M2494.4,718.7 l-8,8" stroke="#2aa0aa" stroke-width="2.6"/><path d="M2502.6,726.8 l-8,8" stroke="#2aa0aa" stroke-width="2.6"/><path d="M2510.8,734.9 l-8,8" stroke="#2aa0aa" stroke-width="2.6"/></svg>
<div class="t" style="left:2217.0px;width:300px;text-align:center;top:441.0px;font-size:16.5px;line-height:16.5px;color:#2a2a2a;font-weight:normal;">Single Run</div>
<div class="t" style="left:2321.5px;width:300px;text-align:center;top:441.0px;font-size:16.5px;line-height:16.5px;color:#2a2a2a;font-weight:normal;">Triple Run</div>
<div class="t" style="left:2427.0px;width:300px;text-align:center;top:441.0px;font-size:16.5px;line-height:16.5px;color:#2a2a2a;font-weight:normal;">Sculpture</div>
<div class="t" style="left:2427.0px;width:300px;text-align:center;top:464.0px;font-size:16.5px;line-height:16.5px;color:#2a2a2a;font-weight:normal;">Run</div>
<div class="t" style="left:2532.0px;width:300px;text-align:center;top:441.0px;font-size:16.5px;line-height:16.5px;color:#2a2a2a;font-weight:normal;">Motif</div>
<div class="t" style="left:2217.0px;width:300px;text-align:center;top:604.0px;font-size:16.5px;line-height:16.5px;color:#2a2a2a;font-weight:normal;">Backstitch</div>
<div class="t" style="left:2322.0px;width:300px;text-align:center;top:604.0px;font-size:16.5px;line-height:16.5px;color:#2a2a2a;font-weight:normal;">Stemstitch</div>
<div class="t" style="left:2427.0px;width:300px;text-align:center;top:604.0px;font-size:16.5px;line-height:16.5px;color:#2a2a2a;font-weight:normal;">Zigzag</div>
<div class="t" style="left:2532.0px;width:300px;text-align:center;top:604.0px;font-size:16.5px;line-height:16.5px;color:#2a2a2a;font-weight:normal;">Satin</div>
<div class="t" style="left:2217.0px;width:300px;text-align:center;top:766.0px;font-size:16.5px;line-height:16.5px;color:#2a2a2a;font-weight:normal;">Raised Satin</div>
<div class="t" style="left:2322.0px;width:300px;text-align:center;top:766.0px;font-size:16.5px;line-height:16.5px;color:#2a2a2a;font-weight:normal;">Blanket</div>
<div class="b" style="left:2302px;top:824px;width:470px;height:190px;background:#eeeeee"></div>
<div class="t" style="left:2310.0px;top:843.6px;font-size:17px;line-height:17px;color:#111;font-weight:bold;">Stitch settings</div>
<div class="t" style="left:2329.5px;top:882.9px;font-size:15.5px;line-height:15.5px;color:#222;font-weight:normal;">Length:</div>
<div class="b" style="left:2452px;top:878px;width:74px;height:27px;background:#fff;border-bottom:1px solid #c0c0c0"></div>
<div class="t" style="left:2459.0px;top:883.9px;font-size:15.5px;line-height:15.5px;color:#1e1e1e;font-weight:normal;">2.50</div>
<div class="b" style="left:2526px;top:878px;width:25px;height:27px;background:#f2f2f2;border:1px solid #c4c4c4"></div>
<svg class="b" style="left:2533px;top:883px" width="10" height="18" viewBox="0 0 10 18"><path d="M0 6 L5 0 L10 6 Z M0 12 H10 L5 18 Z" fill="#333"/></svg>
<div class="t" style="left:2556.0px;top:884.9px;font-size:15.5px;line-height:15.5px;color:#222;font-weight:normal;">mm</div>
<div class="b" style="left:2330px;top:922px;width:20px;height:20px;background:#1a6fd0;border-radius:3px"></div>
<svg class="b" style="left:2333px;top:926px" width="14" height="12" viewBox="0 0 14 12"><path d="M2 6 L5.5 9.5 L12 2" stroke="#fff" stroke-width="1.6" fill="none"/></svg>
<div class="t" style="left:2353.5px;top:924.9px;font-size:15.5px;line-height:15.5px;color:#222;font-weight:normal;">Variable run length</div>
<div class="t" style="left:2329.5px;top:965.9px;font-size:15.5px;line-height:15.5px;color:#222;font-weight:normal;">Min length:</div>
<div class="b" style="left:2452px;top:960px;width:74px;height:27px;background:#fff;border-bottom:1px solid #c0c0c0"></div>
<div class="t" style="left:2459.0px;top:965.9px;font-size:15.5px;line-height:15.5px;color:#1e1e1e;font-weight:normal;">1.25</div>
<div class="b" style="left:2526px;top:960px;width:25px;height:27px;background:#f2f2f2;border:1px solid #c4c4c4"></div>
<svg class="b" style="left:2533px;top:965px" width="10" height="18" viewBox="0 0 10 18"><path d="M0 6 L5 0 L10 6 Z M0 12 H10 L5 18 Z" fill="#333"/></svg>
<div class="t" style="left:2556.0px;top:966.9px;font-size:15.5px;line-height:15.5px;color:#222;font-weight:normal;">mm</div>
<div class="b" style="left:2794px;top:187px;width:24px;height:1548px;background:#ececec"></div>
<div class="b" style="left:2794px;top:191px;width:28px;height:271px;background:#c9def2;border:1px solid #9ab0c6;border-radius:4px 0 0 4px"></div>
<svg class="b" style="left:2797px;top:199px" width="22" height="24" viewBox="0 0 22 24"><path d="M3 23 L11 8 L19 23 M6 16 H16" stroke="#d03030" stroke-width="3" fill="none"/><circle cx="11" cy="6" r="5" fill="#f0b030"/></svg>
<div class="t" style="left:2798px;top:227px;width:20px;font-size:18px;line-height:20px;color:#333;writing-mode:vertical-rl;">Keyboard Design Collection</div>
<div class="b" style="left:2794px;top:484px;width:28px;height:83px;background:#c9def2;border:1px solid #9ab0c6;border-radius:4px 0 0 4px"></div>
<svg class="b" style="left:2797px;top:491px" width="22" height="24" viewBox="0 0 22 24"><circle cx="12" cy="12" r="7" fill="#f0b040" stroke="#555" stroke-width="1"/><rect x="9" y="18" width="6" height="5" fill="#3a98a8"/><path d="M2 12 H4 M20 12 H22 M5 4 L6.5 5.5 M19 4 L17.5 5.5 M12 1 V3" stroke="#555" stroke-width="1.2"/></svg>
<div class="t" style="left:2798px;top:519px;width:20px;font-size:18px;line-height:20px;color:#333;writing-mode:vertical-rl;">Hints</div>
<div class="b" style="left:2794px;top:588px;width:28px;height:197px;background:#c9def2;border:1px solid #9ab0c6;border-radius:4px 0 0 4px"></div>
<svg class="b" style="left:2797px;top:596px" width="22" height="24" viewBox="0 0 22 24"><circle cx="11" cy="13" r="10" fill="none" stroke="#333" stroke-width="1.6"/><path d="M11 11 V19 M11 7 V8.5" stroke="#333" stroke-width="2.2"/></svg>
<div class="t" style="left:2798px;top:624px;width:20px;font-size:18px;line-height:20px;color:#333;writing-mode:vertical-rl;">Design Information</div>
<div class="b" style="left:2794px;top:806px;width:28px;height:185px;background:#c9def2;border:1px solid #9ab0c6;border-radius:4px 0 0 4px"></div>
<svg class="b" style="left:2797px;top:809px" width="22" height="24" viewBox="0 0 22 24"><rect x="1" y="4" width="22" height="20" fill="#fff" stroke="#333" stroke-width="1.5"/><rect x="1" y="4" width="22" height="3" fill="#2a5a9a"/><circle cx="8" cy="14" r="4" fill="#4caf50"/><rect x="11" y="12" width="10" height="7" fill="#e04848"/><path d="M4 21 L8 16 L12 21 Z" fill="#2a6ad0"/></svg>
<div class="t" style="left:2798px;top:837px;width:20px;font-size:18px;line-height:20px;color:#333;writing-mode:vertical-rl;">Design Overview</div>
<div class="b" style="left:2794px;top:1012px;width:28px;height:110px;background:#c9def2;border:1px solid #9ab0c6;border-radius:4px 0 0 4px"></div>
<svg class="b" style="left:2797px;top:1017px" width="22" height="24" viewBox="0 0 22 24"><rect x="1" y="4" width="22" height="4" fill="#d49040" stroke="#555" stroke-width="0.8"/><rect x="1" y="21" width="22" height="4" fill="#d49040" stroke="#555" stroke-width="0.8"/><rect x="3" y="8" width="18" height="13" fill="#3a98a8" stroke="#333" stroke-width="0.8"/></svg>
<div class="t" style="left:2798px;top:1045px;width:20px;font-size:18px;line-height:20px;color:#333;writing-mode:vertical-rl;">Threads</div>
<div class="b" style="left:0px;top:1733px;width:2818px;height:74px;background:#ebebeb"></div>
<div class="b" style="left:428px;top:1734px;width:2390px;height:2px;background:#d2d2d2"></div>
<div class="b" style="left:3px;top:1741px;width:9px;height:60px;background-image:radial-gradient(circle at 1.5px 1.5px,#a0a0a0 0.9px,transparent 1.3px),radial-gradient(circle at 1.5px 1.5px,#a0a0a0 0.9px,transparent 1.3px);background-size:6px 6px,6px 6px;background-position:0 0,3px 3px;"></div>
<div class="b" style="left:13px;top:1746px;width:49px;height:47px;background:#9b1b1f"></div>
<div class="t" style="left:-112.5px;width:300px;text-align:center;top:1761.6px;font-size:17px;line-height:17px;color:#fff;font-weight:normal;">1</div>
<div class="b" style="left:66px;top:1741px;width:1px;height:60px;background:#cfcfcf;border-right:1px solid #fafafa"></div>
<svg class="b" style="left:84px;top:1740px" width="40" height="40" viewBox="0 0 40 40"><path d="M4 36 L27 15" stroke="#333" stroke-width="7.5" stroke-linecap="round"/><path d="M5 35 L27 15" stroke="#1e9098" stroke-width="4"/><path d="M1 39 L3 32 L8 37 Z" fill="#333"/><path d="M21 10.5 L33 17" stroke="#333" stroke-width="7" stroke-linecap="round"/><path d="M21 10.5 L33 17" stroke="#f2bc60" stroke-width="3.6" stroke-linecap="round"/><path d="M29 11 L36.5 5" stroke="#333" stroke-width="7" stroke-linecap="round"/><path d="M29 11 L36.5 5" stroke="#f2bc60" stroke-width="3.6" stroke-linecap="round"/></svg>
<div class="t" style="left:-46.5px;width:300px;text-align:center;top:1784.1px;font-size:17.6px;line-height:17.6px;color:#2b2b2b;font-weight:normal;">Pick</div>
<svg class="b" style="left:150px;top:1740px" width="40" height="40" viewBox="0 0 40 40"><path d="M20.9 10.5 L38.5 24.7 L25.3 37.6 L9.6 22.5 Z" fill="#f2bc60" stroke="#333" stroke-width="2" stroke-linejoin="round"/><path d="M25.9 3 L20.9 21" stroke="#333" stroke-width="3.4" stroke-linecap="round"/><circle cx="20.9" cy="22" r="3.6" fill="#333"/><path d="M14 16 Q7 15 5 22 Q4 30 4.5 37 Q7 26 11 20 Z" fill="#1e9098"/></svg>
<div class="t" style="left:22.0px;width:300px;text-align:center;top:1784.1px;font-size:17.6px;line-height:17.6px;color:#2b2b2b;font-weight:normal;">Apply</div>
<div class="b" style="left:209px;top:1741px;width:1px;height:60px;background:#cfcfcf;border-right:1px solid #fafafa"></div>
<div class="b" style="left:216px;top:1746px;width:48px;height:48px;background:#06080c"></div>
<div class="b" style="left:222px;top:1752px;width:36px;height:36px;background:#fff"></div>
<div class="b" style="left:225px;top:1755px;width:30px;height:30px;background:#9b1b1f"></div>
<div class="t" style="left:90.0px;width:300px;text-align:center;top:1761.6px;font-size:17px;line-height:17px;color:#fff;font-weight:normal;">1</div>
<div class="b" style="left:249px;top:1746px;width:12px;height:12px;background:#0a1cf0;border:1px solid #fff"></div>
<div class="b" style="left:270px;top:1749px;width:42px;height:42px;background:#0c4f9c"></div>
<div class="t" style="left:141.0px;width:300px;text-align:center;top:1761.6px;font-size:17px;line-height:17px;color:#fff;font-weight:normal;">2</div>
<div class="b" style="left:321px;top:1749px;width:42px;height:42px;background:#22a035"></div>
<div class="t" style="left:192.0px;width:300px;text-align:center;top:1761.6px;font-size:17px;line-height:17px;color:#fff;font-weight:normal;">3</div>
<div class="b" style="left:372px;top:1749px;width:42px;height:42px;background:#ffff10"></div>
<div class="t" style="left:243.0px;width:300px;text-align:center;top:1761.6px;font-size:17px;line-height:17px;color:#111;font-weight:normal;">4</div>
<div class="b" style="left:423px;top:1749px;width:42px;height:42px;background:#8cc3fa"></div>
<div class="t" style="left:294.0px;width:300px;text-align:center;top:1761.6px;font-size:17px;line-height:17px;color:#111;font-weight:normal;">5</div>
<div class="b" style="left:474px;top:1749px;width:42px;height:42px;background:#e39cc6"></div>
<div class="t" style="left:345.0px;width:300px;text-align:center;top:1761.6px;font-size:17px;line-height:17px;color:#fff;font-weight:normal;">6</div>
<div class="b" style="left:525px;top:1749px;width:42px;height:42px;background:#452a7c"></div>
<div class="t" style="left:396.0px;width:300px;text-align:center;top:1761.6px;font-size:17px;line-height:17px;color:#fff;font-weight:normal;">7</div>
<div class="b" style="left:576px;top:1749px;width:42px;height:42px;background:#6c4a30"></div>
<div class="t" style="left:447.0px;width:300px;text-align:center;top:1761.6px;font-size:17px;line-height:17px;color:#fff;font-weight:normal;">8</div>
<div class="b" style="left:627px;top:1749px;width:42px;height:42px;background:#8f959b"></div>
<div class="t" style="left:498.0px;width:300px;text-align:center;top:1761.6px;font-size:17px;line-height:17px;color:#fff;font-weight:normal;">9</div>
<div class="b" style="left:678px;top:1749px;width:42px;height:42px;background:#e6f0fa"></div>
<div class="t" style="left:549.0px;width:300px;text-align:center;top:1761.6px;font-size:17px;line-height:17px;color:#111;font-weight:normal;">10</div>
<div class="b" style="left:729px;top:1749px;width:42px;height:42px;background:#070b0f"></div>
<div class="t" style="left:600.0px;width:300px;text-align:center;top:1761.6px;font-size:17px;line-height:17px;color:#fff;font-weight:normal;">11</div>
<div class="b" style="left:780px;top:1749px;width:42px;height:42px;background:#fdb515"></div>
<div class="t" style="left:651.0px;width:300px;text-align:center;top:1761.6px;font-size:17px;line-height:17px;color:#111;font-weight:normal;">12</div>
<div class="b" style="left:831px;top:1749px;width:42px;height:42px;background:#f0f0e0"></div>
<div class="t" style="left:702.0px;width:300px;text-align:center;top:1761.6px;font-size:17px;line-height:17px;color:#111;font-weight:normal;">13</div>
<div class="b" style="left:882px;top:1749px;width:42px;height:42px;background:#fde4e4"></div>
<div class="t" style="left:753.0px;width:300px;text-align:center;top:1761.6px;font-size:17px;line-height:17px;color:#111;font-weight:normal;">14</div>
<div class="b" style="left:933px;top:1749px;width:42px;height:42px;background:#ee7311"></div>
<div class="t" style="left:804.0px;width:300px;text-align:center;top:1761.6px;font-size:17px;line-height:17px;color:#fff;font-weight:normal;">15</div>
<div class="b" style="left:984px;top:1749px;width:42px;height:42px;background:#a5e57c"></div>
<div class="t" style="left:855.0px;width:300px;text-align:center;top:1761.6px;font-size:17px;line-height:17px;color:#111;font-weight:normal;">16</div>
<div class="b" style="left:1035px;top:1749px;width:42px;height:42px;background:#a55d6e"></div>
<div class="t" style="left:906.0px;width:300px;text-align:center;top:1761.6px;font-size:17px;line-height:17px;color:#fff;font-weight:normal;">17</div>
<div class="b" style="left:1086px;top:1749px;width:42px;height:42px;background:#17468e"></div>
<div class="t" style="left:957.0px;width:300px;text-align:center;top:1761.6px;font-size:17px;line-height:17px;color:#fff;font-weight:normal;">18</div>
<div class="b" style="left:1137px;top:1749px;width:42px;height:42px;background:#a9d0ec"></div>
<div class="t" style="left:1008.0px;width:300px;text-align:center;top:1761.6px;font-size:17px;line-height:17px;color:#111;font-weight:normal;">19</div>
<div class="b" style="left:1188px;top:1749px;width:42px;height:42px;background:#f79a74"></div>
<div class="t" style="left:1059.0px;width:300px;text-align:center;top:1761.6px;font-size:17px;line-height:17px;color:#fff;font-weight:normal;">20</div>
<div class="b" style="left:1239px;top:1749px;width:42px;height:42px;background:#75a55e"></div>
<div class="t" style="left:1110.0px;width:300px;text-align:center;top:1761.6px;font-size:17px;line-height:17px;color:#fff;font-weight:normal;">21</div>
<div class="b" style="left:1290px;top:1749px;width:42px;height:42px;background:#436f2b"></div>
<div class="t" style="left:1161.0px;width:300px;text-align:center;top:1761.6px;font-size:17px;line-height:17px;color:#fff;font-weight:normal;">22</div>
<div class="b" style="left:1341px;top:1749px;width:42px;height:42px;background:#d48aa2"></div>
<div class="t" style="left:1212.0px;width:300px;text-align:center;top:1761.6px;font-size:17px;line-height:17px;color:#fff;font-weight:normal;">23</div>
<div class="b" style="left:1392px;top:1749px;width:42px;height:42px;background:#fdd06d"></div>
<div class="t" style="left:1263.0px;width:300px;text-align:center;top:1761.6px;font-size:17px;line-height:17px;color:#111;font-weight:normal;">24</div>
<div class="b" style="left:1443px;top:1749px;width:42px;height:42px;background:#5e402c"></div>
<div class="t" style="left:1314.0px;width:300px;text-align:center;top:1761.6px;font-size:17px;line-height:17px;color:#fff;font-weight:normal;">25</div>
<div class="b" style="left:1494px;top:1749px;width:42px;height:42px;background:#10a4c5"></div>
<div class="t" style="left:1365.0px;width:300px;text-align:center;top:1761.6px;font-size:17px;line-height:17px;color:#fff;font-weight:normal;">26</div>
<div class="b" style="left:1545px;top:1749px;width:42px;height:42px;background:#7e2533"></div>
<div class="t" style="left:1416.0px;width:300px;text-align:center;top:1761.6px;font-size:17px;line-height:17px;color:#fff;font-weight:normal;">27</div>
<div class="b" style="left:1596px;top:1749px;width:42px;height:42px;background:#223e8e"></div>
<div class="t" style="left:1467.0px;width:300px;text-align:center;top:1761.6px;font-size:17px;line-height:17px;color:#fff;font-weight:normal;">28</div>
<div class="b" style="left:1647px;top:1749px;width:42px;height:42px;background:#45515a"></div>
<div class="t" style="left:1518.0px;width:300px;text-align:center;top:1761.6px;font-size:17px;line-height:17px;color:#fff;font-weight:normal;">29</div>
<div class="b" style="left:1698px;top:1749px;width:42px;height:42px;background:#1c4c32"></div>
<div class="t" style="left:1569.0px;width:300px;text-align:center;top:1761.6px;font-size:17px;line-height:17px;color:#fff;font-weight:normal;">30</div>
<div class="b" style="left:1749px;top:1749px;width:42px;height:42px;background:#8db634"></div>
<div class="t" style="left:1620.0px;width:300px;text-align:center;top:1761.6px;font-size:17px;line-height:17px;color:#fff;font-weight:normal;">31</div>
<div class="b" style="left:1800px;top:1749px;width:42px;height:42px;background:#c8292b"></div>
<div class="t" style="left:1671.0px;width:300px;text-align:center;top:1761.6px;font-size:17px;line-height:17px;color:#fff;font-weight:normal;">32</div>
<div class="b" style="left:1851px;top:1749px;width:42px;height:42px;background:#eceae0"></div>
<div class="t" style="left:1722.0px;width:300px;text-align:center;top:1761.6px;font-size:17px;line-height:17px;color:#111;font-weight:normal;">33</div>
<div class="b" style="left:1902px;top:1749px;width:42px;height:42px;background:#fffb68"></div>
<div class="t" style="left:1773.0px;width:300px;text-align:center;top:1761.6px;font-size:17px;line-height:17px;color:#111;font-weight:normal;">34</div>
<div class="b" style="left:1953px;top:1749px;width:42px;height:42px;background:#18233a"></div>
<div class="t" style="left:1824.0px;width:300px;text-align:center;top:1761.6px;font-size:17px;line-height:17px;color:#fff;font-weight:normal;">35</div>
<div class="b" style="left:2004px;top:1749px;width:42px;height:42px;background:#785ea6"></div>
<div class="t" style="left:1875.0px;width:300px;text-align:center;top:1761.6px;font-size:17px;line-height:17px;color:#fff;font-weight:normal;">36</div>
<div class="b" style="left:2055px;top:1749px;width:42px;height:42px;background:#989270"></div>
<div class="t" style="left:1926.0px;width:300px;text-align:center;top:1761.6px;font-size:17px;line-height:17px;color:#fff;font-weight:normal;">37</div>
<div class="b" style="left:2106px;top:1749px;width:42px;height:42px;background:#e54b7b"></div>
<div class="t" style="left:1977.0px;width:300px;text-align:center;top:1761.6px;font-size:17px;line-height:17px;color:#fff;font-weight:normal;">38</div>
<div class="b" style="left:2157px;top:1749px;width:42px;height:42px;background:#4959a8"></div>
<div class="t" style="left:2028.0px;width:300px;text-align:center;top:1761.6px;font-size:17px;line-height:17px;color:#fff;font-weight:normal;">39</div>
<div class="b" style="left:2208px;top:1749px;width:42px;height:42px;background:#74e24a"></div>
<div class="t" style="left:2079.0px;width:300px;text-align:center;top:1761.6px;font-size:17px;line-height:17px;color:#111;font-weight:normal;">40</div>
<div class="b" style="left:2259px;top:1749px;width:42px;height:42px;background:#a91e58"></div>
<div class="t" style="left:2130.0px;width:300px;text-align:center;top:1761.6px;font-size:17px;line-height:17px;color:#fff;font-weight:normal;">41</div>
<div class="b" style="left:2310px;top:1749px;width:42px;height:42px;background:#1e9eb5"></div>
<div class="t" style="left:2181.0px;width:300px;text-align:center;top:1761.6px;font-size:17px;line-height:17px;color:#fff;font-weight:normal;">42</div>
<div class="b" style="left:2402px;top:1745px;width:25px;height:50px;background:#fff;border:1px solid #c8c8c8"></div>
<svg class="b" style="left:2409px;top:1752px" width="12" height="7" viewBox="0 0 12 7"><path d="M0 7 L6 0 L12 7 Z" fill="#666"/></svg>
<svg class="b" style="left:2409px;top:1780px" width="12" height="7" viewBox="0 0 12 7"><path d="M0 0 H12 L6 7 Z" fill="#666"/></svg>
<div class="b" style="left:2432px;top:1741px;width:1px;height:60px;background:#cfcfcf;border-right:1px solid #fafafa"></div>
<svg class="b" style="left:2452px;top:1744px" width="36" height="36" viewBox="0 0 36 36"><path d="M18 2 V32 M3 17 H33" stroke="#3a3a3a" stroke-width="6"/></svg>
<div class="t" style="left:2319.7px;width:300px;text-align:center;top:1784.1px;font-size:17.6px;line-height:17.6px;color:#2b2b2b;font-weight:normal;">Add</div>
<svg class="b" style="left:2526px;top:1744px" width="36" height="36" viewBox="0 0 36 36"><path d="M3 17 H33" stroke="#3a3a3a" stroke-width="6"/></svg>
<div class="t" style="left:2393.7px;width:300px;text-align:center;top:1784.1px;font-size:17.6px;line-height:17.6px;color:#2b2b2b;font-weight:normal;">Remove</div>
<div class="b" style="left:2588px;top:1741px;width:1px;height:60px;background:#cfcfcf;border-right:1px solid #fafafa"></div>
<svg class="b" style="left:2608px;top:1746px" width="36" height="30" viewBox="0 0 36 30"><rect x="0" y="4" width="9" height="22" fill="#4aa8b0"/><rect x="26" y="4" width="9" height="22" fill="#e06060"/><rect x="9" y="4" width="17" height="22" fill="#f0b040"/><path d="M10 6 L24 24 M10 12 L20 24 M14 6 L25 20 M18 6 L25 14" stroke="#333" stroke-width="1.6"/><rect x="7" y="2" width="3" height="3" fill="#1020f0"/><rect x="25" y="2" width="3" height="3" fill="#1020f0"/></svg>
<div class="t" style="left:2476.5px;width:300px;text-align:center;top:1784.1px;font-size:17.6px;line-height:17.6px;color:#2b2b2b;font-weight:normal;">Hide</div>
<svg class="b" style="left:2679px;top:1746px" width="36" height="30" viewBox="0 0 36 30"><rect x="0" y="4" width="9" height="22" fill="#4aa8b0"/><rect x="26" y="4" width="9" height="22" fill="#e06060"/><rect x="9" y="4" width="17" height="22" fill="#f0b040"/><path d="M10 5 L25 26 M25 5 L10 26" stroke="#333" stroke-width="1.6"/><rect x="7" y="2" width="3" height="3" fill="#1020f0"/><rect x="25" y="2" width="3" height="3" fill="#1020f0"/></svg>
<div class="t" style="left:2547.0px;width:300px;text-align:center;top:1784.1px;font-size:17.6px;line-height:17.6px;color:#2b2b2b;font-weight:normal;">Discard</div>
<div class="b" style="left:2738px;top:1741px;width:1px;height:60px;background:#cfcfcf;border-right:1px solid #fafafa"></div>
<svg class="b" style="left:2765px;top:1743px" width="34" height="36" viewBox="0 0 34 36"><rect x="2" y="0" width="30" height="5" rx="2" fill="#e0a050" stroke="#555" stroke-width="1"/><rect x="2" y="29" width="30" height="5" rx="2" fill="#e0a050" stroke="#555" stroke-width="1"/><rect x="5" y="5" width="24" height="24" fill="#4aa8b0" stroke="#444" stroke-width="1"/></svg>
<div class="t" style="left:2631.5px;width:300px;text-align:center;top:1784.1px;font-size:17.6px;line-height:17.6px;color:#2b2b2b;font-weight:normal;">Threads</div>
<div class="b" style="left:0px;top:1807px;width:2818px;height:30px;background:#276a96"></div>
<div class="b" style="left:0px;top:1837px;width:2818px;height:2px;background:#8a9098"></div>
<div class="b" style="left:0px;top:1839px;width:2818px;height:4px;background:#0a1422"></div>
<div class="t" style="left:1857.0px;top:1815.0px;font-size:16.5px;line-height:16.5px;color:#f0f4f8;font-weight:normal;">W&nbsp;&nbsp;70.0 H&nbsp;&nbsp;82.0</div>
<div class="t" style="left:2320.0px;top:1815.0px;font-size:16.5px;line-height:16.5px;color:#f0f4f8;font-weight:normal;">124</div>
<div class="t" style="left:2401.0px;top:1815.0px;font-size:16.5px;line-height:16.5px;color:#f0f4f8;font-weight:normal;">Pure Cotton</div>
<div class="t" style="left:2647.0px;top:1815.0px;font-size:16.5px;line-height:16.5px;color:#f0f4f8;font-weight:normal;">EMB Grade: A</div>
<svg class="b" style="left:2760px;top:1813px" width="20" height="18" viewBox="0 0 20 18"><path d="M10 17 L2 9 Q-1 5 2 2 Q6 -1 10 4 Q14 -1 18 2 Q21 5 18 9 Z" fill="#e02020"/></svg>
</body></html>
